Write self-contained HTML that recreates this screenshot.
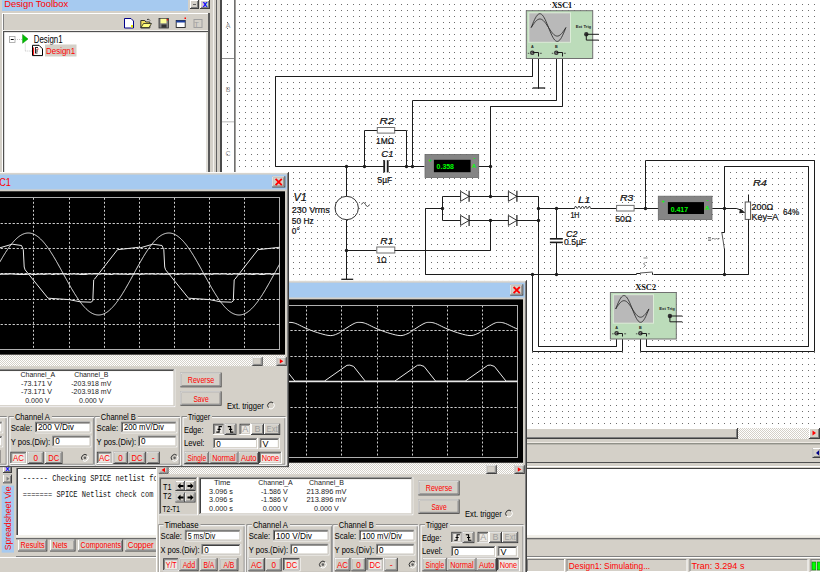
<!DOCTYPE html><html><head><meta charset="utf-8"><style>html,body{margin:0;padding:0;overflow:hidden;background:#d4d0c8}svg{display:block}</style></head><body><svg width="820" height="572" viewBox="0 0 820 572"><rect x="0" y="0" width="820" height="572" fill="#d4d0c8"/>
<rect x="236" y="0" width="584" height="428" fill="#ffffff" />
<defs><pattern id="dots" x="239" y="4" width="5.986" height="5.986" patternUnits="userSpaceOnUse"><rect x="0" y="0" width="1.2" height="1.2" fill="#7c7c7c"/></pattern></defs>
<defs><pattern id="dA" x="239" y="4" width="6" height="6" patternUnits="userSpaceOnUse"><rect x="0" y="0" width="1" height="1" fill="#6e6e6e"/></pattern><pattern id="dB" x="238" y="4" width="6" height="6" patternUnits="userSpaceOnUse"><rect x="0" y="0" width="1" height="1" fill="#6e6e6e"/></pattern><pattern id="dC" x="239" y="3" width="6" height="6" patternUnits="userSpaceOnUse"><rect x="0" y="0" width="1" height="1" fill="#6e6e6e"/></pattern><pattern id="dD" x="238" y="3" width="6" height="6" patternUnits="userSpaceOnUse"><rect x="0" y="0" width="1" height="1" fill="#6e6e6e"/></pattern></defs>
<rect x="236" y="0" width="216" height="390" fill="url(#dA)" />
<rect x="452" y="0" width="368" height="390" fill="url(#dB)" />
<rect x="236" y="390" width="216" height="38" fill="url(#dC)" />
<rect x="452" y="390" width="368" height="38" fill="url(#dD)" />
<rect x="209" y="0" width="7" height="175" fill="#d4d0c8" />
<rect x="213" y="0" width="1" height="175" fill="#f4f2ee" />
<rect x="216" y="0" width="1" height="175" fill="#606060" />
<rect x="217" y="0" width="3" height="175" fill="#d4d0c8" />
<rect x="220" y="0" width="2" height="175" fill="#4a4a4a" />
<rect x="222" y="0" width="12" height="175" fill="#ffffff" />
<defs><pattern id="rdots" x="227" y="4" width="7" height="6" patternUnits="userSpaceOnUse"><rect x="0" y="0" width="1" height="1" fill="#6e6e6e"/><rect x="7" y="0" width="1" height="1" fill="#4a4a4a"/></pattern></defs>
<rect x="227" y="0" width="8" height="172" fill="url(#rdots)" />
<rect x="234" y="0" width="1.5" height="175" fill="#707070" />
<rect x="222" y="58" width="12" height="1" fill="#8c8c8c" />
<rect x="222" y="121" width="12" height="1.5" fill="#d0d0d0" />
<text x="228" y="28" font-family="Liberation Sans" font-size="7" fill="#909090" font-weight="normal" font-style="normal" text-anchor="middle"  >A</text>
<text x="228" y="91.5" font-family="Liberation Sans" font-size="7" fill="#909090" font-weight="normal" font-style="normal" text-anchor="middle"  >B</text>
<text x="228" y="156" font-family="Liberation Sans" font-size="7" fill="#909090" font-weight="normal" font-style="normal" text-anchor="middle"  >C</text>
<polyline points="275.50,166.50 275.50,76.50 532.50,76.50 532.50,52.50" fill="none" stroke="#1c1c1c" stroke-width="1" />
<polyline points="275.50,166.50 384.50,166.50" fill="none" stroke="#1c1c1c" stroke-width="1" />
<polyline points="388.50,166.50 424.50,166.50" fill="none" stroke="#1c1c1c" stroke-width="1" />
<rect x="383.3" y="160.2" width="1.8" height="12.2" fill="#1c1c1c" />
<rect x="386.8" y="160.2" width="1.8" height="12.2" fill="#1c1c1c" />
<polyline points="364.50,166.50 364.50,130.50 377.50,130.50" fill="none" stroke="#1c1c1c" stroke-width="1" />
<rect x="377.3" y="127.50000000000001" width="17.399999999999977" height="5.6" fill="#ffffff" stroke="#707070" stroke-width="1"/>
<polyline points="394.50,130.50 406.50,130.50 406.50,166.50" fill="none" stroke="#1c1c1c" stroke-width="1" />
<circle cx="346.5" cy="166.5" r="1.7" fill="#1c1c1c"/>
<circle cx="364.5" cy="166.5" r="1.7" fill="#1c1c1c"/>
<circle cx="406.5" cy="166.5" r="1.7" fill="#1c1c1c"/>
<circle cx="412.5" cy="166.5" r="1.7" fill="#1c1c1c"/>
<polyline points="412.50,166.50 412.50,100.50 556.50,100.50 556.50,52.50" fill="none" stroke="#1c1c1c" stroke-width="1" />
<polyline points="478.50,166.50 490.50,166.50" fill="none" stroke="#1c1c1c" stroke-width="1" />
<circle cx="490.5" cy="166.5" r="1.7" fill="#1c1c1c"/>
<polyline points="490.50,196.50 490.50,106.50 562.50,106.50 562.50,52.50" fill="none" stroke="#1c1c1c" stroke-width="1" />
<polyline points="538.50,52.50 538.50,88.50" fill="none" stroke="#1c1c1c" stroke-width="1" />
<line x1="532.7" y1="88" x2="545.2" y2="88" stroke="#1c1c1c" stroke-width="1.3" />
<polyline points="346.50,166.50 346.50,196.50" fill="none" stroke="#1c1c1c" stroke-width="1" />
<polyline points="346.50,219.50 346.50,279.50" fill="none" stroke="#1c1c1c" stroke-width="1" />
<line x1="341.3" y1="279.3" x2="353.2" y2="279.3" stroke="#1c1c1c" stroke-width="1.3" />
<circle cx="346.7" cy="208" r="11.7" fill="none" stroke="#333" stroke-width="1"/>
<path d="M361.5,204.5 q2,-4 4,0 t4,0" fill="none" stroke="#333" stroke-width="0.9"/>
<polyline points="346.50,250.50 376.50,250.50" fill="none" stroke="#1c1c1c" stroke-width="1" />
<circle cx="346.5" cy="250.5" r="1.7" fill="#1c1c1c"/>
<rect x="376.8" y="247.0" width="18.0" height="6" fill="#ffffff" stroke="#707070" stroke-width="1"/>
<polyline points="394.50,250.50 490.50,250.50 490.50,220.50" fill="none" stroke="#1c1c1c" stroke-width="1" />
<polyline points="442.50,196.50 538.50,196.50" fill="none" stroke="#1c1c1c" stroke-width="1" />
<polyline points="442.50,220.50 538.50,220.50" fill="none" stroke="#1c1c1c" stroke-width="1" />
<polyline points="442.50,196.50 442.50,220.50" fill="none" stroke="#1c1c1c" stroke-width="1" />
<polyline points="538.50,196.50 538.50,346.50 616.50,346.50 616.50,334.50" fill="none" stroke="#1c1c1c" stroke-width="1" />
<polygon points="460.6,191.3 460.6,201.3 469.1,196.3" fill="#fff" stroke="#333" stroke-width="1"/>
<line x1="469.1" y1="190.8" x2="469.1" y2="201.8" stroke="#1c1c1c" stroke-width="1.2" />
<polygon points="508.4,191.3 508.4,201.3 516.9,196.3" fill="#fff" stroke="#333" stroke-width="1"/>
<line x1="516.9" y1="190.8" x2="516.9" y2="201.8" stroke="#1c1c1c" stroke-width="1.2" />
<polygon points="460.6,215.4 460.6,225.4 469.1,220.4" fill="#fff" stroke="#333" stroke-width="1"/>
<line x1="469.1" y1="214.9" x2="469.1" y2="225.9" stroke="#1c1c1c" stroke-width="1.2" />
<polygon points="508.4,215.4 508.4,225.4 516.9,220.4" fill="#fff" stroke="#333" stroke-width="1"/>
<line x1="516.9" y1="214.9" x2="516.9" y2="225.9" stroke="#1c1c1c" stroke-width="1.2" />
<circle cx="490.5" cy="196.5" r="1.7" fill="#1c1c1c"/>
<circle cx="490.5" cy="220.5" r="1.7" fill="#1c1c1c"/>
<circle cx="442.5" cy="208.5" r="1.7" fill="#1c1c1c"/>
<circle cx="538.5" cy="208.5" r="1.7" fill="#1c1c1c"/>
<circle cx="538.5" cy="220.5" r="1.7" fill="#1c1c1c"/>
<polyline points="442.50,208.50 425.50,208.50 425.50,274.50 636.50,274.50" fill="none" stroke="#1c1c1c" stroke-width="1" />
<polyline points="653.50,274.50 748.50,274.50" fill="none" stroke="#1c1c1c" stroke-width="1" />
<circle cx="532.5" cy="274.5" r="1.7" fill="#1c1c1c"/>
<circle cx="556.5" cy="274.5" r="1.7" fill="#1c1c1c"/>
<circle cx="724.5" cy="274.5" r="1.7" fill="#1c1c1c"/>
<polyline points="532.50,274.50 532.50,351.50 622.50,351.50 622.50,334.50" fill="none" stroke="#1c1c1c" stroke-width="1" />
<polyline points="538.50,208.50 574.50,208.50" fill="none" stroke="#1c1c1c" stroke-width="1" />
<circle cx="556.5" cy="208.5" r="1.7" fill="#1c1c1c"/>
<polyline points="556.50,208.50 556.50,238.50" fill="none" stroke="#1c1c1c" stroke-width="1" />
<polyline points="556.50,242.50 556.50,274.50" fill="none" stroke="#1c1c1c" stroke-width="1" />
<rect x="549.9" y="238" width="12.9" height="1.6" fill="#1c1c1c" />
<rect x="549.9" y="241.6" width="12.9" height="1.6" fill="#1c1c1c" />
<polyline points="574.40,208.20 575.50,206.00 577.25,208.50 579.00,206.00 580.75,208.50 582.50,206.00 584.25,208.50 586.00,206.00 587.75,208.50 589.50,206.00 590.50,208.20" fill="none" stroke="#333" stroke-width="0.9" />
<polyline points="590.50,208.50 616.50,208.50" fill="none" stroke="#1c1c1c" stroke-width="1" />
<rect x="616.6" y="205.39999999999998" width="17.5" height="5.6" fill="#ffffff" stroke="#707070" stroke-width="1"/>
<polyline points="634.50,208.50 658.50,208.50" fill="none" stroke="#1c1c1c" stroke-width="1" />
<circle cx="645.5" cy="208.5" r="1.7" fill="#1c1c1c"/>
<polyline points="645.50,208.50 645.50,160.50 814.50,160.50 814.50,351.50 640.50,351.50 640.50,334.50" fill="none" stroke="#1c1c1c" stroke-width="1" />
<polyline points="712.50,208.50 724.50,208.50" fill="none" stroke="#1c1c1c" stroke-width="1" />
<circle cx="724.5" cy="208.5" r="1.7" fill="#1c1c1c"/>
<polyline points="724.50,208.50 724.50,166.50 808.50,166.50 808.50,346.50 646.50,346.50 646.50,334.50" fill="none" stroke="#1c1c1c" stroke-width="1" />
<polyline points="724.50,208.50 736.50,208.50 742.50,210.50" fill="none" stroke="#1c1c1c" stroke-width="1" />
<polygon points="740,208.8 745.6,212.7 739.2,213.2" fill="#222"/>
<polyline points="748.50,194.50 748.50,202.50" fill="none" stroke="#1c1c1c" stroke-width="1" />
<rect x="745.2" y="202" width="5.4" height="17.4" fill="#ffffff" stroke="#555" stroke-width="1"/>
<polyline points="748.50,219.50 748.50,274.50" fill="none" stroke="#1c1c1c" stroke-width="1" />
<polyline points="724.50,208.50 724.50,232.50 721.50,232.50" fill="none" stroke="#1c1c1c" stroke-width="1" />
<line x1="721.8" y1="232.4" x2="724.4" y2="249" stroke="#555" stroke-width="1" />
<polyline points="724.50,248.50 724.50,274.50" fill="none" stroke="#1c1c1c" stroke-width="1" />
<path d="M708,239 h3 M708,237.5 h3 M708,240.5 h3 M712,239.5 l1.5,-1.5 l1.5,1.5 l1.5,-1.5 l1.5,1.5 l1.5,-1.5" fill="none" stroke="#555" stroke-width="0.7"/>
<polyline points="636.50,274.50 636.50,273.50 640.50,273.50" fill="none" stroke="#1c1c1c" stroke-width="1" />
<line x1="640" y1="273" x2="652.5" y2="272" stroke="#555" stroke-width="1" />
<polyline points="652.50,272.50 652.50,274.50" fill="none" stroke="#1c1c1c" stroke-width="1" />
<path d="M645.5,262 l-2,2 l2,1.5 l-2,2 M643.5,258 h4" fill="none" stroke="#555" stroke-width="0.7"/>
<rect x="425" y="154.4" width="53.69999999999999" height="23.099999999999994" fill="#858585" stroke="#6a6a6a" stroke-width="0.8"/>
<rect x="433.9" y="159.8" width="36.700000000000045" height="12.399999999999977" fill="#000000" />
<text x="436.6" y="169" font-family="Liberation Sans" font-size="7.6" fill="#00ff00" font-weight="bold" font-style="normal" text-anchor="start" textLength="17.4" lengthAdjust="spacingAndGlyphs" >0.358</text>
<text x="430" y="161.6" font-family="Liberation Sans" font-size="6" fill="#00ff00" font-weight="bold" font-style="normal" text-anchor="middle"  >+</text>
<text x="474.2" y="160.4" font-family="Liberation Sans" font-size="6" fill="#00ff00" font-weight="bold" font-style="normal" text-anchor="middle"  >-</text>
<text x="473.9" y="168.45" font-family="Liberation Sans" font-size="6" fill="#00ff00" font-weight="bold" font-style="normal" text-anchor="middle"  >A</text>
<rect x="658.3" y="196.2" width="53.700000000000045" height="23.400000000000006" fill="#858585" stroke="#6a6a6a" stroke-width="0.8"/>
<rect x="667.9" y="202.1" width="36.10000000000002" height="11.900000000000006" fill="#000000" />
<text x="670.7" y="211.5" font-family="Liberation Sans" font-size="7.6" fill="#00ff00" font-weight="bold" font-style="normal" text-anchor="start" textLength="17.4" lengthAdjust="spacingAndGlyphs" >0.417</text>
<text x="663.3" y="203.39999999999998" font-family="Liberation Sans" font-size="6" fill="#00ff00" font-weight="bold" font-style="normal" text-anchor="middle"  >+</text>
<text x="707.5" y="202.2" font-family="Liberation Sans" font-size="6" fill="#00ff00" font-weight="bold" font-style="normal" text-anchor="middle"  >-</text>
<text x="707.2" y="210.39999999999998" font-family="Liberation Sans" font-size="6" fill="#00ff00" font-weight="bold" font-style="normal" text-anchor="middle"  >A</text>
<rect x="526.3" y="10.7" width="66.40000000000009" height="47.8" fill="#bcdcba" stroke="#707070" stroke-width="1"/>
<rect x="528.8" y="12.8" width="41.700000000000045" height="29.499999999999996" fill="#b9b9b9" stroke="#dcecd8" stroke-width="1"/>
<polyline points="531.20,27.55 532.07,25.38 532.93,23.27 533.80,21.26 534.67,19.40 535.54,17.75 536.40,16.33 537.27,15.20 538.14,14.36 539.01,13.86 539.88,13.69 540.74,13.86 541.61,14.36 542.48,15.20 543.34,16.33 544.21,17.75 545.08,19.40 545.95,21.26 546.81,23.27 547.68,25.38 548.55,27.55 549.42,29.72 550.28,31.83 551.15,33.84 552.02,35.70 552.89,37.35 553.75,38.77 554.62,39.90 555.49,40.74 556.36,41.24 557.22,41.41 558.09,41.24 558.96,40.74 559.83,39.90 560.69,38.77 561.56,37.35 562.43,35.70 563.30,33.84 564.16,31.83 565.03,29.72 565.90,27.55" fill="none" stroke="#222" stroke-width="0.8" />
<polyline points="531.20,27.55 532.07,26.21 532.93,24.91 533.80,23.67 534.67,22.52 535.54,21.50 536.40,20.63 537.27,19.93 538.14,19.41 539.01,19.10 539.88,18.99 540.74,19.10 541.61,19.41 542.48,19.93 543.34,20.63 544.21,21.50 545.08,22.52 545.95,23.67 546.81,24.91 547.68,26.21 548.55,27.55 549.42,28.89 550.28,30.19 551.15,31.43 552.02,32.58 552.89,33.60 553.75,34.47 554.62,35.17 555.49,35.69 556.36,36.00 557.22,36.10 558.09,36.00 558.96,35.69 559.83,35.17 560.69,34.47 561.56,33.60 562.43,32.58 563.30,31.43 564.16,30.19 565.03,28.89 565.90,27.55" fill="none" stroke="#222" stroke-width="0.8" />
<text x="551.7" y="7.7" font-family="Liberation Serif" font-size="7.7" fill="#111" font-weight="bold" font-style="normal" text-anchor="start" textLength="20.5" lengthAdjust="spacingAndGlyphs" >XSC1</text>
<text x="575.7" y="28.299999999999997" font-family="Liberation Sans" font-size="4.2" fill="#222" font-weight="bold" font-style="normal" text-anchor="start" textLength="15.5" lengthAdjust="spacingAndGlyphs" >Ext Trig</text>
<circle cx="586.3000000000001" cy="34.3" r="2.2" fill="#333"/>
<line x1="586.3000000000001" y1="34.3" x2="598.7" y2="34.3" stroke="#1c1c1c" stroke-width="1" />
<polyline points="586.30,34.30 586.30,40.10 598.70,40.10" fill="none" stroke="#1c1c1c" stroke-width="1" />
<circle cx="532.3" cy="52.8" r="2.3" fill="#333"/>
<line x1="531.0" y1="52.8" x2="533.5999999999999" y2="52.8" stroke="#bbb" stroke-width="0.5" />
<line x1="532.3" y1="51.5" x2="532.3" y2="54.099999999999994" stroke="#bbb" stroke-width="0.5" />
<text x="532.3" y="48.3" font-family="Liberation Sans" font-size="3.8" fill="#222" font-weight="bold" font-style="normal" text-anchor="middle"  >A</text>
<line x1="527.8" y1="53.3" x2="529.3" y2="53.3" stroke="#333" stroke-width="0.8" />
<line x1="539.8" y1="53.3" x2="541.8" y2="53.3" stroke="#333" stroke-width="0.8" />
<circle cx="556.3" cy="52.8" r="2.3" fill="#333"/>
<line x1="555.0" y1="52.8" x2="557.5999999999999" y2="52.8" stroke="#bbb" stroke-width="0.5" />
<line x1="556.3" y1="51.5" x2="556.3" y2="54.099999999999994" stroke="#bbb" stroke-width="0.5" />
<text x="556.3" y="48.3" font-family="Liberation Sans" font-size="3.8" fill="#222" font-weight="bold" font-style="normal" text-anchor="middle"  >B</text>
<line x1="551.8" y1="53.3" x2="553.3" y2="53.3" stroke="#333" stroke-width="0.8" />
<line x1="563.8" y1="53.3" x2="565.8" y2="53.3" stroke="#333" stroke-width="0.8" />
<polyline points="532.50,52.50 538.50,52.50 538.50,56.50" fill="none" stroke="#1c1c1c" stroke-width="1" />
<polyline points="556.50,52.50 562.50,52.50 562.50,56.50" fill="none" stroke="#1c1c1c" stroke-width="1" />
<rect x="610.4" y="292.5" width="65.89999999999998" height="46.5" fill="#bcdcba" stroke="#707070" stroke-width="1"/>
<rect x="613.3" y="294.7" width="40.200000000000045" height="28.5" fill="#b9b9b9" stroke="#dcecd8" stroke-width="1"/>
<polyline points="615.70,308.95 616.53,306.85 617.36,304.81 618.19,302.87 619.02,301.08 619.85,299.48 620.68,298.11 621.51,297.01 622.34,296.21 623.17,295.72 624.00,295.56 624.83,295.72 625.66,296.21 626.49,297.01 627.32,298.11 628.15,299.48 628.98,301.08 629.81,302.87 630.64,304.81 631.47,306.85 632.30,308.95 633.13,311.05 633.96,313.09 634.79,315.03 635.62,316.82 636.45,318.42 637.28,319.79 638.11,320.89 638.94,321.69 639.77,322.18 640.60,322.34 641.43,322.18 642.26,321.69 643.09,320.89 643.92,319.79 644.75,318.42 645.58,316.82 646.41,315.03 647.24,313.09 648.07,311.05 648.90,308.95" fill="none" stroke="#222" stroke-width="0.8" />
<polyline points="615.70,308.95 616.53,307.66 617.36,306.40 618.19,305.20 619.02,304.09 619.85,303.11 620.68,302.26 621.51,301.59 622.34,301.09 623.17,300.79 624.00,300.69 624.83,300.79 625.66,301.09 626.49,301.59 627.32,302.26 628.15,303.11 628.98,304.09 629.81,305.20 630.64,306.40 631.47,307.66 632.30,308.95 633.13,310.24 633.96,311.50 634.79,312.70 635.62,313.81 636.45,314.79 637.28,315.64 638.11,316.31 638.94,316.81 639.77,317.11 640.60,317.21 641.43,317.11 642.26,316.81 643.09,316.31 643.92,315.64 644.75,314.79 645.58,313.81 646.41,312.70 647.24,311.50 648.07,310.24 648.90,308.95" fill="none" stroke="#222" stroke-width="0.8" />
<text x="635.2" y="290" font-family="Liberation Serif" font-size="7.7" fill="#111" font-weight="bold" font-style="normal" text-anchor="start" textLength="20.9" lengthAdjust="spacingAndGlyphs" >XSC2</text>
<text x="659.3" y="310" font-family="Liberation Sans" font-size="4.2" fill="#222" font-weight="bold" font-style="normal" text-anchor="start" textLength="15.5" lengthAdjust="spacingAndGlyphs" >Ext Trig</text>
<circle cx="669.9" cy="316" r="2.2" fill="#333"/>
<line x1="669.9" y1="316" x2="682.3" y2="316" stroke="#1c1c1c" stroke-width="1" />
<polyline points="669.90,316.00 669.90,321.80 682.30,321.80" fill="none" stroke="#1c1c1c" stroke-width="1" />
<circle cx="616.6" cy="333.3" r="2.3" fill="#333"/>
<line x1="615.3000000000001" y1="333.3" x2="617.9" y2="333.3" stroke="#bbb" stroke-width="0.5" />
<line x1="616.6" y1="332.0" x2="616.6" y2="334.6" stroke="#bbb" stroke-width="0.5" />
<text x="616.6" y="328.8" font-family="Liberation Sans" font-size="3.8" fill="#222" font-weight="bold" font-style="normal" text-anchor="middle"  >A</text>
<line x1="612.1" y1="333.8" x2="613.6" y2="333.8" stroke="#333" stroke-width="0.8" />
<line x1="624.1" y1="333.8" x2="626.1" y2="333.8" stroke="#333" stroke-width="0.8" />
<circle cx="640.4" cy="333.3" r="2.3" fill="#333"/>
<line x1="639.1" y1="333.3" x2="641.6999999999999" y2="333.3" stroke="#bbb" stroke-width="0.5" />
<line x1="640.4" y1="332.0" x2="640.4" y2="334.6" stroke="#bbb" stroke-width="0.5" />
<text x="640.4" y="328.8" font-family="Liberation Sans" font-size="3.8" fill="#222" font-weight="bold" font-style="normal" text-anchor="middle"  >B</text>
<line x1="635.9" y1="333.8" x2="637.4" y2="333.8" stroke="#333" stroke-width="0.8" />
<line x1="647.9" y1="333.8" x2="649.9" y2="333.8" stroke="#333" stroke-width="0.8" />
<polyline points="616.50,333.50 622.50,333.50 622.50,336.50" fill="none" stroke="#1c1c1c" stroke-width="1" />
<polyline points="640.50,333.50 646.50,333.50 646.50,336.50" fill="none" stroke="#1c1c1c" stroke-width="1" />
<text x="379.4" y="124" font-family="Liberation Sans" font-size="9.5" fill="#111" font-weight="normal" font-style="italic" text-anchor="start" textLength="14.8" lengthAdjust="spacingAndGlyphs" stroke="#111" stroke-width="0.22">R2</text>
<text x="376" y="144" font-family="Liberation Sans" font-size="9.5" fill="#111" font-weight="normal" font-style="normal" text-anchor="start" textLength="18" lengthAdjust="spacingAndGlyphs" stroke="#111" stroke-width="0.22">1MΩ</text>
<text x="381.3" y="157" font-family="Liberation Sans" font-size="9.5" fill="#111" font-weight="normal" font-style="italic" text-anchor="start" textLength="12.3" lengthAdjust="spacingAndGlyphs" stroke="#111" stroke-width="0.22">C1</text>
<text x="377.6" y="182.7" font-family="Liberation Sans" font-size="9.5" fill="#111" font-weight="normal" font-style="normal" text-anchor="start" textLength="14.6" lengthAdjust="spacingAndGlyphs" stroke="#111" stroke-width="0.22">5µF</text>
<text x="293.6" y="200.7" font-family="Liberation Sans" font-size="10.5" fill="#111" font-weight="normal" font-style="italic" text-anchor="start" textLength="13.2" lengthAdjust="spacingAndGlyphs" stroke="#111" stroke-width="0.22">V1</text>
<text x="291.8" y="213.4" font-family="Liberation Sans" font-size="9.5" fill="#111" font-weight="normal" font-style="normal" text-anchor="start" textLength="38" lengthAdjust="spacingAndGlyphs" stroke="#111" stroke-width="0.22">230 Vrms</text>
<text x="291.8" y="223.6" font-family="Liberation Sans" font-size="9.5" fill="#111" font-weight="normal" font-style="normal" text-anchor="start" textLength="22" lengthAdjust="spacingAndGlyphs" stroke="#111" stroke-width="0.22">50 Hz</text>
<text x="291.8" y="234.3" font-family="Liberation Sans" font-size="9.5" fill="#111" font-weight="normal" font-style="normal" text-anchor="start" textLength="8" lengthAdjust="spacingAndGlyphs" stroke="#111" stroke-width="0.22">0°</text>
<text x="380.3" y="243.5" font-family="Liberation Sans" font-size="9.5" fill="#111" font-weight="normal" font-style="italic" text-anchor="start" textLength="13.1" lengthAdjust="spacingAndGlyphs" stroke="#111" stroke-width="0.22">R1</text>
<text x="376.8" y="263.3" font-family="Liberation Sans" font-size="9.5" fill="#111" font-weight="normal" font-style="normal" text-anchor="start" textLength="9.9" lengthAdjust="spacingAndGlyphs" stroke="#111" stroke-width="0.22">1Ω</text>
<text x="578" y="203.1" font-family="Liberation Sans" font-size="9.5" fill="#111" font-weight="normal" font-style="italic" text-anchor="start" textLength="12.5" lengthAdjust="spacingAndGlyphs" stroke="#111" stroke-width="0.22">L1</text>
<text x="570.4" y="217.6" font-family="Liberation Sans" font-size="9.5" fill="#111" font-weight="normal" font-style="normal" text-anchor="start" textLength="9.1" lengthAdjust="spacingAndGlyphs" stroke="#111" stroke-width="0.22">1H</text>
<text x="566" y="236.9" font-family="Liberation Sans" font-size="9.5" fill="#111" font-weight="normal" font-style="italic" text-anchor="start" textLength="11.5" lengthAdjust="spacingAndGlyphs" stroke="#111" stroke-width="0.22">C2</text>
<text x="564" y="245.4" font-family="Liberation Sans" font-size="9.5" fill="#111" font-weight="normal" font-style="normal" text-anchor="start" textLength="22.1" lengthAdjust="spacingAndGlyphs" stroke="#111" stroke-width="0.22">0.5µF</text>
<text x="620" y="201.3" font-family="Liberation Sans" font-size="9.5" fill="#111" font-weight="normal" font-style="italic" text-anchor="start" textLength="13.4" lengthAdjust="spacingAndGlyphs" stroke="#111" stroke-width="0.22">R3</text>
<text x="615.2" y="222.3" font-family="Liberation Sans" font-size="9.5" fill="#111" font-weight="normal" font-style="normal" text-anchor="start" textLength="16.4" lengthAdjust="spacingAndGlyphs" stroke="#111" stroke-width="0.22">50Ω</text>
<text x="752.9" y="186.3" font-family="Liberation Sans" font-size="9.5" fill="#111" font-weight="normal" font-style="italic" text-anchor="start" textLength="13.9" lengthAdjust="spacingAndGlyphs" stroke="#111" stroke-width="0.22">R4</text>
<text x="751.5" y="209.6" font-family="Liberation Sans" font-size="9.5" fill="#111" font-weight="normal" font-style="normal" text-anchor="start" textLength="21.6" lengthAdjust="spacingAndGlyphs" stroke="#111" stroke-width="0.22">200Ω</text>
<text x="751.5" y="220.2" font-family="Liberation Sans" font-size="9.5" fill="#111" font-weight="normal" font-style="normal" text-anchor="start" textLength="26.9" lengthAdjust="spacingAndGlyphs" stroke="#111" stroke-width="0.22">Key=A</text>
<text x="783" y="214.5" font-family="Liberation Sans" font-size="9.5" fill="#111" font-weight="normal" font-style="normal" text-anchor="start" textLength="16.3" lengthAdjust="spacingAndGlyphs" stroke="#111" stroke-width="0.22">64%</text>
<rect x="0" y="0" width="209" height="175" fill="#d4d0c8" />
<rect x="2" y="0" width="186" height="11" fill="#a6caf0" />
<text x="4.2" y="7.4" font-family="Liberation Sans" font-size="9.6" fill="#ff0000" font-weight="normal" font-style="normal" text-anchor="start" textLength="64" lengthAdjust="spacingAndGlyphs" >Design Toolbox</text>
<rect x="190" y="0" width="9" height="9" fill="#404040" />
<rect x="190" y="0" width="8" height="8" fill="#ffffff" />
<rect x="191" y="1" width="7" height="7" fill="#808080" />
<rect x="191" y="1" width="6" height="6" fill="#d4d0c8" />
<line x1="193" y1="4.5" x2="196" y2="4.5" stroke="#606060" stroke-width="1" />
<rect x="200" y="0" width="10" height="9" fill="#404040" />
<rect x="200" y="0" width="9" height="8" fill="#ffffff" />
<rect x="201" y="1" width="8" height="7" fill="#808080" />
<rect x="201" y="1" width="7" height="6" fill="#d4d0c8" />
<text x="205" y="7.3" font-family="Liberation Sans" font-size="9" fill="#0000ff" font-weight="bold" font-style="normal" text-anchor="middle"  >x</text>
<rect x="2" y="13" width="207" height="1" fill="#ffffff" />
<rect x="2" y="13" width="1" height="19" fill="#ffffff" />
<rect x="3" y="14" width="1" height="16" fill="#808080" />
<rect x="208" y="13" width="1" height="19" fill="#404040" />
<rect x="2" y="30" width="207" height="1" fill="#f4f2ee" />
<rect x="3" y="31" width="206" height="1.3" fill="#505050" />
<path d="M124.5,18.5 h6.5 l2.5,2.5 v7 h-9 z" fill="#fff" stroke="#00008b" stroke-width="1"/>
<rect x="131" y="25" width="2" height="2.5" fill="#e8e800" />
<path d="M140.8,20.5 h4 l1,1.5 h4 v6 h-9 z" fill="#f0e060" stroke="#222" stroke-width="0.9"/>
<path d="M141,27.5 l2.5,-4 h8 l-2.5,4 z" fill="#ffff80" stroke="#222" stroke-width="0.8"/>
<path d="M147,19.5 q2,-1 3,1" fill="none" stroke="#222" stroke-width="0.9"/>
<rect x="159" y="18.5" width="9.5" height="9.5" fill="#808080" stroke="#333" stroke-width="0.8"/>
<rect x="160.5" y="18.8" width="6" height="4.5" fill="#ffff99" />
<rect x="161.5" y="24.5" width="5" height="3.2" fill="#333" />
<rect x="166.8" y="19" width="1.2" height="1.5" fill="#ff0000" />
<rect x="176.2" y="20.5" width="9" height="7" fill="#ffffff" stroke="#222" stroke-width="0.9"/>
<rect x="176.2" y="20.5" width="9" height="2" fill="#1a3ea0" />
<rect x="184.5" y="17.5" width="1.5" height="1.5" fill="#ff0000" />
<rect x="194" y="19.5" width="8" height="8" fill="none" stroke="#a0a0a0" stroke-width="1"/>
<text x="196.5" y="27" font-family="Liberation Sans" font-size="8" fill="#a0a0a0" font-weight="normal" font-style="normal" text-anchor="middle"  >T</text>
<rect x="3" y="32.3" width="203" height="141" fill="#ffffff" />
<rect x="2" y="32" width="1" height="141" fill="#ffffff" />
<rect x="3" y="32" width="1.2" height="141" fill="#505050" />
<rect x="206" y="32" width="2" height="141" fill="#e2e0da" />
<rect x="208" y="13" width="2" height="160" fill="#5a5a5a" />
<rect x="3" y="172" width="206" height="1.5" fill="#ffffff" />
<rect x="9.5" y="36.5" width="5.5" height="6" fill="#ffffff" stroke="#a0a0a0" stroke-width="0.8"/>
<line x1="10.8" y1="39.5" x2="13.7" y2="39.5" stroke="#000" stroke-width="1" />
<line x1="15" y1="39.5" x2="22" y2="39.5" stroke="#a0a0a0" stroke-width="0.6" stroke-dasharray="1,1"/>
<polygon points="22.6,34.5 22.6,43.3 28,39" fill="#00c000" stroke="#008000" stroke-width="0.5"/>
<text x="33.7" y="43" font-family="Liberation Sans" font-size="10.2" fill="#000" font-weight="normal" font-style="normal" text-anchor="start" textLength="28.9" lengthAdjust="spacingAndGlyphs" >Design1</text>
<line x1="25.3" y1="43.5" x2="25.3" y2="51" stroke="#a0a0a0" stroke-width="0.6" stroke-dasharray="1,1"/>
<line x1="25.3" y1="51" x2="32" y2="51" stroke="#a0a0a0" stroke-width="0.6" stroke-dasharray="1,1"/>
<path d="M32.5,45.3 h6.5 l3.5,3.5 v6.8 h-10 z" fill="#fff" stroke="#000" stroke-width="1"/>
<line x1="33.6" y1="47.5" x2="33.6" y2="55" stroke="#ff0000" stroke-width="1" />
<path d="M35,47.5 h3 M35.5,48 v5 M35,53 h2.5 M37,49 v3" fill="none" stroke="#111" stroke-width="0.9"/>
<rect x="37.5" y="48.5" width="1" height="1" fill="#ff0000" />
<rect x="45" y="44.5" width="31.5" height="12" fill="#d4d0c8" />
<text x="46.1" y="54.3" font-family="Liberation Sans" font-size="9" fill="#ff0000" font-weight="normal" font-style="normal" text-anchor="start" textLength="29.1" lengthAdjust="spacingAndGlyphs" >Design1</text>
<defs><pattern id="chk" x="0" y="0" width="2" height="2" patternUnits="userSpaceOnUse"><rect width="2" height="2" fill="#ffffff"/><rect width="1" height="1" fill="#d4d0c8"/><rect x="1" y="1" width="1" height="1" fill="#d4d0c8"/></pattern></defs>
<rect x="236" y="428" width="584" height="11" fill="url(#chk)" />
<rect x="236" y="428" width="502" height="11" fill="#404040" />
<rect x="236" y="428" width="501" height="10" fill="#ffffff" />
<rect x="237" y="429" width="500" height="9" fill="#808080" />
<rect x="237" y="429" width="499" height="8" fill="#d4d0c8" />
<rect x="809" y="428" width="11" height="11" fill="#404040" />
<rect x="809" y="428" width="10" height="10" fill="#ffffff" />
<rect x="810" y="429" width="9" height="9" fill="#808080" />
<rect x="810" y="429" width="8" height="8" fill="#d4d0c8" />
<polygon points="812.5,430.5 812.5,435.5 816,433" fill="#ff0000"/>
<rect x="0" y="439" width="820" height="3" fill="#d4d0c8" />
<rect x="0" y="443" width="820" height="1.4" fill="#909088" />
<rect x="812.5" y="448" width="9" height="10" fill="#404040" />
<rect x="812.5" y="448" width="8" height="9" fill="#ffffff" />
<rect x="813.5" y="449" width="7" height="8" fill="#808080" />
<rect x="813.5" y="449" width="6" height="7" fill="#d4d0c8" />
<polygon points="819,450.3 819,455.5 816,452.9" fill="#00008b"/>
<rect x="0" y="442" width="820" height="1" fill="#eeeae4" />
<rect x="0" y="462" width="820" height="1" fill="#505050" />
<rect x="0" y="466" width="820" height="1" fill="#ffffff" />
<rect x="16" y="468" width="804" height="69" fill="#ffffff" />
<rect x="16" y="468" width="804" height="1" fill="#404040" />
<rect x="16" y="468" width="1" height="69" fill="#808080" />
<rect x="17" y="469" width="1" height="68" fill="#404040" />
<rect x="16" y="535" width="804" height="2.5" fill="#f2f0ea" />
<rect x="16" y="538" width="804" height="1.3" fill="#6a6a6a" />
<text x="22.7" y="480.8" font-family="Liberation Mono" font-size="9.4" fill="#111" font-weight="normal" font-style="normal" text-anchor="start" textLength="135" lengthAdjust="spacingAndGlyphs" >------ Checking SPICE netlist fo</text>
<text x="22.7" y="497.4" font-family="Liberation Mono" font-size="9.4" fill="#111" font-weight="normal" font-style="normal" text-anchor="start" textLength="130.8" lengthAdjust="spacingAndGlyphs" >======= SPICE Netlist check com</text>
<rect x="18" y="539.5" width="29.299999999999997" height="12" fill="#404040" />
<rect x="18" y="539.5" width="28.299999999999997" height="11" fill="#ffffff" />
<rect x="19" y="540.5" width="27.299999999999997" height="10" fill="#808080" />
<rect x="19" y="540.5" width="26.299999999999997" height="9" fill="#d4d0c8" />
<text x="20.5" y="548.2" font-family="Liberation Sans" font-size="8.4" fill="#ff0000" font-weight="normal" font-style="normal" text-anchor="start" textLength="24" lengthAdjust="spacingAndGlyphs" >Results</text>
<rect x="50" y="539.5" width="25.5" height="12" fill="#404040" />
<rect x="50" y="539.5" width="24.5" height="11" fill="#ffffff" />
<rect x="51" y="540.5" width="23.5" height="10" fill="#808080" />
<rect x="51" y="540.5" width="22.5" height="9" fill="#d4d0c8" />
<text x="52.5" y="548.2" font-family="Liberation Sans" font-size="8.4" fill="#ff0000" font-weight="normal" font-style="normal" text-anchor="start" textLength="15" lengthAdjust="spacingAndGlyphs" >Nets</text>
<rect x="78" y="539.5" width="45.099999999999994" height="12" fill="#404040" />
<rect x="78" y="539.5" width="44.099999999999994" height="11" fill="#ffffff" />
<rect x="79" y="540.5" width="43.099999999999994" height="10" fill="#808080" />
<rect x="79" y="540.5" width="42.099999999999994" height="9" fill="#d4d0c8" />
<text x="80.5" y="548.2" font-family="Liberation Sans" font-size="8.4" fill="#ff0000" font-weight="normal" font-style="normal" text-anchor="start" textLength="40.5" lengthAdjust="spacingAndGlyphs" >Components</text>
<rect x="125.2" y="539.5" width="34.8" height="12" fill="#404040" />
<rect x="125.2" y="539.5" width="33.8" height="11" fill="#ffffff" />
<rect x="126.2" y="540.5" width="32.8" height="10" fill="#808080" />
<rect x="126.2" y="540.5" width="31.799999999999997" height="9" fill="#d4d0c8" />
<text x="127.7" y="548.2" font-family="Liberation Sans" font-size="8.4" fill="#ff0000" font-weight="normal" font-style="normal" text-anchor="start" textLength="30" lengthAdjust="spacingAndGlyphs" >Copper l</text>
<rect x="0" y="556" width="820" height="1" fill="#808080" />
<rect x="0" y="557" width="820" height="1" fill="#ffffff" />
<rect x="527" y="559" width="38" height="1" fill="#808080" />
<rect x="527" y="559" width="1" height="13" fill="#808080" />
<rect x="527" y="571" width="38" height="1" fill="#ffffff" />
<rect x="564" y="559" width="1" height="13" fill="#ffffff" />
<rect x="566.5" y="559" width="121.0" height="1" fill="#808080" />
<rect x="566.5" y="559" width="1" height="13" fill="#808080" />
<rect x="566.5" y="571" width="121.0" height="1" fill="#ffffff" />
<rect x="686.5" y="559" width="1" height="13" fill="#ffffff" />
<rect x="689.5" y="559" width="119.0" height="1" fill="#808080" />
<rect x="689.5" y="559" width="1" height="13" fill="#808080" />
<rect x="689.5" y="571" width="119.0" height="1" fill="#ffffff" />
<rect x="807.5" y="559" width="1" height="13" fill="#ffffff" />
<rect x="810.5" y="559" width="10.5" height="1" fill="#808080" />
<rect x="810.5" y="559" width="1" height="13" fill="#808080" />
<rect x="810.5" y="571" width="10.5" height="1" fill="#ffffff" />
<rect x="820" y="559" width="1" height="13" fill="#ffffff" />
<text x="568.8" y="568.6" font-family="Liberation Sans" font-size="8.2" fill="#ff0000" font-weight="normal" font-style="normal" text-anchor="start" textLength="81.3" lengthAdjust="spacingAndGlyphs" >Design1: Simulating...</text>
<text x="691.5" y="568.6" font-family="Liberation Sans" font-size="8.2" fill="#ff0000" font-weight="normal" font-style="normal" text-anchor="start" textLength="52.9" lengthAdjust="spacingAndGlyphs" >Tran: 3.294 s</text>
<rect x="812" y="562" width="3.8" height="8" fill="#00ff00" stroke="#008000" stroke-width="0.6"/>
<rect x="817.3" y="562" width="3.8" height="8" fill="#00ff00" stroke="#008000" stroke-width="0.6"/>
<rect x="0" y="462" width="16" height="95" fill="#d4d0c8" />
<rect x="3" y="462" width="9" height="11" fill="#404040" />
<rect x="3" y="462" width="8" height="10" fill="#ffffff" />
<rect x="4" y="463" width="7" height="9" fill="#808080" />
<rect x="4" y="463" width="6" height="8" fill="#d4d0c8" />
<text x="7.5" y="470.5" font-family="Liberation Sans" font-size="8" fill="#0000ff" font-weight="bold" font-style="normal" text-anchor="middle"  >x</text>
<rect x="3" y="474.6" width="9" height="8.7" fill="#404040" />
<rect x="3" y="474.6" width="8" height="7.699999999999999" fill="#ffffff" />
<rect x="4" y="475.6" width="7" height="6.699999999999999" fill="#808080" />
<rect x="4" y="475.6" width="6" height="5.699999999999999" fill="#d4d0c8" />
<polygon points="6.5,476.5 6.5,481 9.5,478.7" fill="#808080"/>
<rect x="1.7" y="485.6" width="12.3" height="67" fill="#a6caf0" />
<text x="0" y="0" transform="translate(10.6,550.2) rotate(-90)" font-family="Liberation Sans" font-size="8.8" fill="#ff0000" textLength="63.7" lengthAdjust="spacingAndGlyphs">Spreadsheet Vie</text>
<rect x="158" y="280.2" width="369" height="294" fill="#d4d0c8" />
<rect x="158" y="280.2" width="369" height="1" fill="#ffffff" />
<rect x="526" y="280.2" width="1" height="294" fill="#404040" />
<rect x="525" y="281.2" width="1" height="293" fill="#808080" />
<rect x="158" y="280.2" width="1" height="294" fill="#ffffff" />
<rect x="158" y="573.2" width="369" height="1" fill="#404040" />
<rect x="159" y="572.2" width="367" height="1" fill="#808080" />
<rect x="160.5" y="282.7" width="364.2" height="15" fill="#a6caf0" />
<text x="169.5" y="294.0" font-family="Liberation Sans" font-size="10.3" fill="#ff0000" font-weight="normal" font-style="normal" text-anchor="start" textLength="79.5" lengthAdjust="spacingAndGlyphs" >Oscilloscope-XSC2</text>
<rect x="510.2" y="284.4" width="13.1" height="11.2" fill="#404040" />
<rect x="510.2" y="284.4" width="12.1" height="10.2" fill="#ffffff" />
<rect x="511.2" y="285.4" width="11.1" height="9.2" fill="#808080" />
<rect x="511.2" y="285.4" width="10.1" height="8.2" fill="#d4d0c8" />
<path d="M513.6,287.0 L519.8,293.2 M519.8,287.0 L513.6,293.2" stroke="#ff0000" stroke-width="1.8"/>
<rect x="160.5" y="297.7" width="364.5" height="1.7" fill="#d4d0c8" />
<rect x="162" y="299.4" width="361" height="163.3" fill="#000000" />
<line x1="201.5" y1="305.5" x2="201.5" y2="457.9" stroke="#cccccc" stroke-width="1" stroke-dasharray="2,2"/>
<line x1="236.5" y1="305.5" x2="236.5" y2="457.9" stroke="#cccccc" stroke-width="1" stroke-dasharray="2,2"/>
<line x1="271.5" y1="305.5" x2="271.5" y2="457.9" stroke="#cccccc" stroke-width="1" stroke-dasharray="2,2"/>
<line x1="306.5" y1="305.5" x2="306.5" y2="457.9" stroke="#cccccc" stroke-width="1" stroke-dasharray="2,2"/>
<line x1="341.5" y1="305.5" x2="341.5" y2="457.9" stroke="#cccccc" stroke-width="1" stroke-dasharray="2,2"/>
<line x1="377.5" y1="305.5" x2="377.5" y2="457.9" stroke="#cccccc" stroke-width="1" stroke-dasharray="2,2"/>
<line x1="412.5" y1="305.5" x2="412.5" y2="457.9" stroke="#cccccc" stroke-width="1" stroke-dasharray="2,2"/>
<line x1="447.5" y1="305.5" x2="447.5" y2="457.9" stroke="#cccccc" stroke-width="1" stroke-dasharray="2,2"/>
<line x1="482.5" y1="305.5" x2="482.5" y2="457.9" stroke="#cccccc" stroke-width="1" stroke-dasharray="2,2"/>
<line x1="166.4" y1="330.5" x2="517.4" y2="330.5" stroke="#cccccc" stroke-width="1" stroke-dasharray="2.3,1.7"/>
<line x1="166.4" y1="356.5" x2="517.4" y2="356.5" stroke="#cccccc" stroke-width="1" stroke-dasharray="2.3,1.7"/>
<line x1="166.4" y1="381.5" x2="517.4" y2="381.5" stroke="#cccccc" stroke-width="1" stroke-dasharray="2.3,1.7"/>
<line x1="166.4" y1="407.5" x2="517.4" y2="407.5" stroke="#cccccc" stroke-width="1" stroke-dasharray="2.3,1.7"/>
<line x1="166.4" y1="432.5" x2="517.4" y2="432.5" stroke="#cccccc" stroke-width="1" stroke-dasharray="2.3,1.7"/>
<rect x="166.5" y="305.5" width="351" height="152" fill="none" stroke="#b0b0b0" stroke-width="1"/>
<clipPath id="cl280.2"><rect x="166.4" y="305.5" width="351" height="152.4"/></clipPath>
<g clip-path="url(#cl280.2)">
<polyline points="150.10,322.40 151.20,322.42 152.24,322.50 153.32,322.69 154.54,323.01 156.00,323.50 157.74,324.23 159.70,325.17 161.81,326.23 164.00,327.31 166.20,328.30 168.43,329.23 170.73,330.16 173.09,331.07 175.48,331.92 177.90,332.70 180.42,333.46 183.06,334.21 185.69,334.88 188.18,335.37 190.40,335.60 192.35,335.50 194.10,335.12 195.68,334.58 197.10,333.97 198.40,333.40 199.40,332.93 200.08,332.49 200.70,331.99 201.52,331.35 202.80,330.50 204.74,329.27 207.17,327.71 209.78,326.07 212.26,324.59 214.30,323.50 215.81,322.87 216.99,322.53 217.98,322.40 218.94,322.38 220.00,322.40 221.10,322.42 222.14,322.50 223.22,322.69 224.44,323.01 225.90,323.50 227.64,324.23 229.60,325.17 231.71,326.23 233.90,327.31 236.10,328.30 238.33,329.23 240.63,330.16 242.99,331.07 245.38,331.92 247.80,332.70 250.32,333.46 252.96,334.21 255.59,334.88 258.08,335.37 260.30,335.60 262.25,335.50 264.00,335.12 265.58,334.58 267.00,333.97 268.30,333.40 269.30,332.93 269.98,332.49 270.60,331.99 271.42,331.35 272.70,330.50 274.64,329.27 277.07,327.71 279.68,326.07 282.16,324.59 284.20,323.50 285.71,322.87 286.89,322.53 287.88,322.40 288.84,322.38 289.90,322.40 291.00,322.42 292.04,322.50 293.12,322.69 294.34,323.01 295.80,323.50 297.54,324.23 299.50,325.17 301.61,326.23 303.80,327.31 306.00,328.30 308.23,329.23 310.53,330.16 312.89,331.07 315.28,331.92 317.70,332.70 320.22,333.46 322.86,334.21 325.49,334.88 327.98,335.37 330.20,335.60 332.15,335.50 333.90,335.12 335.48,334.58 336.90,333.97 338.20,333.40 339.20,332.93 339.88,332.49 340.50,331.99 341.32,331.35 342.60,330.50 344.54,329.27 346.97,327.71 349.58,326.07 352.06,324.59 354.10,323.50 355.61,322.87 356.79,322.53 357.78,322.40 358.74,322.38 359.80,322.40 360.90,322.42 361.94,322.50 363.02,322.69 364.24,323.01 365.70,323.50 367.44,324.23 369.40,325.17 371.51,326.23 373.70,327.31 375.90,328.30 378.13,329.23 380.43,330.16 382.79,331.07 385.18,331.92 387.60,332.70 390.12,333.46 392.76,334.21 395.39,334.88 397.88,335.37 400.10,335.60 402.05,335.50 403.80,335.12 405.38,334.58 406.80,333.97 408.10,333.40 409.10,332.93 409.78,332.49 410.40,331.99 411.22,331.35 412.50,330.50 414.44,329.27 416.87,327.71 419.48,326.07 421.96,324.59 424.00,323.50 425.51,322.87 426.69,322.53 427.68,322.40 428.64,322.38 429.70,322.40 430.80,322.42 431.84,322.50 432.92,322.69 434.14,323.01 435.60,323.50 437.34,324.23 439.30,325.17 441.41,326.23 443.60,327.31 445.80,328.30 448.03,329.23 450.33,330.16 452.69,331.07 455.08,331.92 457.50,332.70 460.02,333.46 462.66,334.21 465.29,334.88 467.78,335.37 470.00,335.60 471.95,335.50 473.70,335.12 475.28,334.58 476.70,333.97 478.00,333.40 479.00,332.93 479.68,332.49 480.30,331.99 481.12,331.35 482.40,330.50 484.34,329.27 486.77,327.71 489.38,326.07 491.86,324.59 493.90,323.50 495.41,322.87 496.59,322.53 497.58,322.40 498.54,322.38 499.60,322.40 500.70,322.42 501.74,322.50 502.82,322.69 504.04,323.01 505.50,323.50 507.24,324.23 509.20,325.17 511.31,326.23 513.50,327.31 515.70,328.30 517.93,329.23 520.23,330.16 522.59,331.07 524.98,331.92 527.40,332.70 529.92,333.46" fill="none" stroke="#e8e8e8" stroke-width="1.0" />
<polyline points="150.00,381.20 113.10,381.20 135.80,365.30 138.60,365.10 142.40,366.40 154.10,381.20 183.50,381.20 206.20,365.30 209.00,365.10 212.80,366.40 224.50,381.20 253.90,381.20 276.60,365.30 279.40,365.10 283.20,366.40 294.90,381.20 324.30,381.20 347.00,365.30 349.80,365.10 353.60,366.40 365.30,381.20 394.70,381.20 417.40,365.30 420.20,365.10 424.00,366.40 435.70,381.20 465.10,381.20 487.80,365.30 490.60,365.10 494.40,366.40 506.10,381.20 535.50,381.20 558.20,365.30 561.00,365.10 564.80,366.40 576.50,381.20 605.90,381.20 628.60,365.30 631.40,365.10 635.20,366.40 646.90,381.20 530.00,381.20" fill="none" stroke="#e8e8e8" stroke-width="1.0" />
<polyline points="160.00,381.50 520.00,381.50" fill="none" stroke="#e8e8e8" stroke-width="1.4" />
</g>
<rect x="162" y="463.2" width="361" height="11" fill="url(#chk)" />
<rect x="158.5" y="466.2" width="10" height="7.5" fill="#404040" />
<rect x="158.5" y="466.2" width="9" height="6.5" fill="#ffffff" />
<rect x="159.5" y="467.2" width="8" height="5.5" fill="#808080" />
<rect x="159.5" y="467.2" width="7" height="4.5" fill="#d4d0c8" />
<polygon points="165,467.7 165,472.2 161.5,469.9" fill="#ff0000"/>
<rect x="486.3" y="465.2" width="10.5" height="8.8" fill="#404040" />
<rect x="486.3" y="465.2" width="9.5" height="7.800000000000001" fill="#ffffff" />
<rect x="487.3" y="466.2" width="8.5" height="6.800000000000001" fill="#808080" />
<rect x="487.3" y="466.2" width="7.5" height="5.800000000000001" fill="#d4d0c8" />
<rect x="514.4" y="465.2" width="10.4" height="8.8" fill="#404040" />
<rect x="514.4" y="465.2" width="9.4" height="7.800000000000001" fill="#ffffff" />
<rect x="515.4" y="466.2" width="8.4" height="6.800000000000001" fill="#808080" />
<rect x="515.4" y="466.2" width="7.4" height="5.800000000000001" fill="#d4d0c8" />
<polygon points="517.8,467.2 517.8,471.7 521.3,469.4" fill="#ff0000"/>
<rect x="159.2" y="477.2" width="38.8" height="38" fill="#ffffff" />
<rect x="159.2" y="477.2" width="37.8" height="37" fill="#808080" />
<rect x="160.2" y="478.2" width="36.8" height="36" fill="#d4d0c8" />
<rect x="160.2" y="478.2" width="35.8" height="35" fill="#404040" />
<rect x="161.2" y="479.2" width="35.8" height="35" fill="#d4d0c8" />
<rect x="161.2" y="479.2" width="34.8" height="34" fill="#d4d0c8" />
<text x="163" y="489.9" font-family="Liberation Sans" font-size="8.2" fill="#000" font-weight="normal" font-style="normal" text-anchor="start" textLength="8.5" lengthAdjust="spacingAndGlyphs" >T1</text>
<text x="163" y="499.0" font-family="Liberation Sans" font-size="8.2" fill="#000" font-weight="normal" font-style="normal" text-anchor="start" textLength="8.5" lengthAdjust="spacingAndGlyphs" >T2</text>
<text x="162.5" y="512.2" font-family="Liberation Sans" font-size="8.2" fill="#000" font-weight="normal" font-style="normal" text-anchor="start" textLength="17.5" lengthAdjust="spacingAndGlyphs" >T2-T1</text>
<rect x="175.4" y="481.0" width="9.7" height="10" fill="#404040" />
<rect x="175.4" y="481.0" width="8.7" height="9" fill="#ffffff" />
<rect x="176.4" y="482.0" width="7.699999999999999" height="8" fill="#808080" />
<rect x="176.4" y="482.0" width="6.699999999999999" height="7" fill="#d4d0c8" />
<rect x="185.1" y="481.0" width="10.4" height="10" fill="#404040" />
<rect x="185.1" y="481.0" width="9.4" height="9" fill="#ffffff" />
<rect x="186.1" y="482.0" width="8.4" height="8" fill="#808080" />
<rect x="186.1" y="482.0" width="7.4" height="7" fill="#d4d0c8" />
<path d="M177.5,486.0 l3,-3 v2 h3 v2 h-3 v2 z" fill="#000"/>
<path d="M193.5,486.0 l-3,-3 v2 h-3 v2 h3 v2 z" fill="#000"/>
<rect x="175.4" y="492.5" width="9.7" height="10" fill="#404040" />
<rect x="175.4" y="492.5" width="8.7" height="9" fill="#ffffff" />
<rect x="176.4" y="493.5" width="7.699999999999999" height="8" fill="#808080" />
<rect x="176.4" y="493.5" width="6.699999999999999" height="7" fill="#d4d0c8" />
<rect x="185.1" y="492.5" width="10.4" height="10" fill="#404040" />
<rect x="185.1" y="492.5" width="9.4" height="9" fill="#ffffff" />
<rect x="186.1" y="493.5" width="8.4" height="8" fill="#808080" />
<rect x="186.1" y="493.5" width="7.4" height="7" fill="#d4d0c8" />
<path d="M177.5,497.5 l3,-3 v2 h3 v2 h-3 v2 z" fill="#000"/>
<path d="M193.5,497.5 l-3,-3 v2 h-3 v2 h3 v2 z" fill="#000"/>
<rect x="199" y="477.2" width="214.3" height="38" fill="#ffffff" />
<rect x="199" y="477.2" width="213.3" height="37" fill="#808080" />
<rect x="200" y="478.2" width="212.3" height="36" fill="#d4d0c8" />
<rect x="200" y="478.2" width="211.3" height="35" fill="#404040" />
<rect x="201" y="479.2" width="211.3" height="35" fill="#d4d0c8" />
<rect x="201" y="479.2" width="210.3" height="34" fill="#ffffff" />
<text x="222.2" y="485.1" font-family="Liberation Sans" font-size="7.6" fill="#1a1a1a" font-weight="normal" font-style="normal" text-anchor="middle" textLength="16.5" lengthAdjust="spacingAndGlyphs" >Time</text>
<text x="275.5" y="485.1" font-family="Liberation Sans" font-size="7.6" fill="#1a1a1a" font-weight="normal" font-style="normal" text-anchor="middle" textLength="34.6" lengthAdjust="spacingAndGlyphs" >Channel_A</text>
<text x="326.5" y="485.1" font-family="Liberation Sans" font-size="7.6" fill="#1a1a1a" font-weight="normal" font-style="normal" text-anchor="middle" textLength="35" lengthAdjust="spacingAndGlyphs" >Channel_B</text>
<text x="221" y="493.63" font-family="Liberation Sans" font-size="7.6" fill="#1a1a1a" font-weight="normal" font-style="normal" text-anchor="middle" textLength="23.8" lengthAdjust="spacingAndGlyphs" >3.096 s</text>
<text x="274.3" y="493.63" font-family="Liberation Sans" font-size="7.6" fill="#1a1a1a" font-weight="normal" font-style="normal" text-anchor="middle" textLength="26.6" lengthAdjust="spacingAndGlyphs" >-1.586 V</text>
<text x="326.5" y="493.63" font-family="Liberation Sans" font-size="7.6" fill="#1a1a1a" font-weight="normal" font-style="normal" text-anchor="middle" textLength="40" lengthAdjust="spacingAndGlyphs" >213.896 mV</text>
<text x="221" y="502.15999999999997" font-family="Liberation Sans" font-size="7.6" fill="#1a1a1a" font-weight="normal" font-style="normal" text-anchor="middle" textLength="23.8" lengthAdjust="spacingAndGlyphs" >3.096 s</text>
<text x="274.3" y="502.15999999999997" font-family="Liberation Sans" font-size="7.6" fill="#1a1a1a" font-weight="normal" font-style="normal" text-anchor="middle" textLength="26.6" lengthAdjust="spacingAndGlyphs" >-1.586 V</text>
<text x="326.5" y="502.15999999999997" font-family="Liberation Sans" font-size="7.6" fill="#1a1a1a" font-weight="normal" font-style="normal" text-anchor="middle" textLength="40" lengthAdjust="spacingAndGlyphs" >213.896 mV</text>
<text x="221" y="510.69" font-family="Liberation Sans" font-size="7.6" fill="#1a1a1a" font-weight="normal" font-style="normal" text-anchor="middle" textLength="23.8" lengthAdjust="spacingAndGlyphs" >0.000 s</text>
<text x="275.2" y="510.69" font-family="Liberation Sans" font-size="7.6" fill="#1a1a1a" font-weight="normal" font-style="normal" text-anchor="middle" textLength="24.8" lengthAdjust="spacingAndGlyphs" >0.000 V</text>
<text x="326.5" y="510.69" font-family="Liberation Sans" font-size="7.6" fill="#1a1a1a" font-weight="normal" font-style="normal" text-anchor="middle" textLength="24.8" lengthAdjust="spacingAndGlyphs" >0.000 V</text>
<rect x="418.4" y="480.7" width="41.200000000000045" height="14.699999999999989" fill="#404040" />
<rect x="418.4" y="480.7" width="40.200000000000045" height="13.699999999999989" fill="#ffffff" />
<rect x="419.4" y="481.7" width="39.200000000000045" height="12.699999999999989" fill="#808080" />
<rect x="419.4" y="481.7" width="38.200000000000045" height="11.699999999999989" fill="#d4d0c8" />
<text x="439.0" y="491.04999999999995" font-family="Liberation Sans" font-size="8.2" fill="#ff0000" font-weight="normal" font-style="normal" text-anchor="middle" textLength="26.5" lengthAdjust="spacingAndGlyphs" >Reverse</text>
<rect x="418.4" y="499.5" width="41.200000000000045" height="14.299999999999955" fill="#404040" />
<rect x="418.4" y="499.5" width="40.200000000000045" height="13.299999999999955" fill="#ffffff" />
<rect x="419.4" y="500.5" width="39.200000000000045" height="12.299999999999955" fill="#808080" />
<rect x="419.4" y="500.5" width="38.200000000000045" height="11.299999999999955" fill="#d4d0c8" />
<text x="439.0" y="509.65" font-family="Liberation Sans" font-size="8.2" fill="#ff0000" font-weight="normal" font-style="normal" text-anchor="middle" textLength="15.2" lengthAdjust="spacingAndGlyphs" >Save</text>
<text x="465" y="516.8" font-family="Liberation Sans" font-size="8.2" fill="#000" font-weight="normal" font-style="normal" text-anchor="start" textLength="36.8" lengthAdjust="spacingAndGlyphs" >Ext. trigger</text>
<path d="M506.5962,516.0038000000001 A3.4,3.4 0 0 1 511.4038,511.19620000000003" fill="none" stroke="#303030" stroke-width="1"/>
<path d="M511.4038,511.19620000000003 A3.4,3.4 0 0 1 506.5962,516.0038000000001" fill="none" stroke="#ffffff" stroke-width="1"/>
<rect x="158.5" y="524.7" width="85.7" height="47.69999999999999" fill="none" stroke="#808080" stroke-width="1"/>
<rect x="159.5" y="525.7" width="85.7" height="47.69999999999999" fill="none" stroke="#ffffff" stroke-width="1"/>
<rect x="163.5" y="520.7" width="37" height="8" fill="#d4d0c8" />
<text x="164.5" y="528.0" font-family="Liberation Sans" font-size="8.3" fill="#000" font-weight="normal" font-style="normal" text-anchor="start" textLength="34" lengthAdjust="spacingAndGlyphs" >Timebase</text>
<text x="160.5" y="538.8" font-family="Liberation Sans" font-size="8.2" fill="#000" font-weight="normal" font-style="normal" text-anchor="start" textLength="21.5" lengthAdjust="spacingAndGlyphs" >Scale:</text>
<rect x="184.7" y="529.7" width="56.5" height="11.699999999999932" fill="#ffffff" />
<rect x="184.7" y="529.7" width="55.5" height="10.699999999999932" fill="#808080" />
<rect x="185.7" y="530.7" width="54.5" height="9.699999999999932" fill="#d4d0c8" />
<rect x="185.7" y="530.7" width="53.5" height="8.699999999999932" fill="#404040" />
<rect x="186.7" y="531.7" width="53.5" height="8.699999999999932" fill="#d4d0c8" />
<rect x="186.7" y="531.7" width="52.5" height="7.699999999999932" fill="#ffffff" />
<text x="187.7" y="538.55" font-family="Liberation Sans" font-size="8.2" fill="#000" font-weight="normal" font-style="normal" text-anchor="start" textLength="27.5" lengthAdjust="spacingAndGlyphs" >5 ms/Div</text>
<text x="160.5" y="552.8" font-family="Liberation Sans" font-size="8.2" fill="#000" font-weight="normal" font-style="normal" text-anchor="start" textLength="39" lengthAdjust="spacingAndGlyphs" >X pos.(Div):</text>
<rect x="201.3" y="544.0" width="39.89999999999998" height="11.399999999999977" fill="#ffffff" />
<rect x="201.3" y="544.0" width="38.89999999999998" height="10.399999999999977" fill="#808080" />
<rect x="202.3" y="545.0" width="37.89999999999998" height="9.399999999999977" fill="#d4d0c8" />
<rect x="202.3" y="545.0" width="36.89999999999998" height="8.399999999999977" fill="#404040" />
<rect x="203.3" y="546.0" width="36.89999999999998" height="8.399999999999977" fill="#d4d0c8" />
<rect x="203.3" y="546.0" width="35.89999999999998" height="7.399999999999977" fill="#ffffff" />
<text x="204.3" y="552.7" font-family="Liberation Sans" font-size="8.2" fill="#000" font-weight="normal" font-style="normal" text-anchor="start" textLength="4.5" lengthAdjust="spacingAndGlyphs" >0</text>
<rect x="163.1" y="558.2" width="16.200000000000017" height="13.0" fill="#ffffff" />
<rect x="163.1" y="558.2" width="15.200000000000017" height="12.0" fill="#404040" />
<rect x="164.1" y="559.2" width="14.200000000000017" height="11.0" fill="#d4d0c8" />
<rect x="164.1" y="559.2" width="13.200000000000017" height="10.0" fill="#808080" />
<rect x="165.1" y="560.2" width="12.200000000000017" height="9.0" fill="#ece9e4" />
<text x="171.2" y="567.7" font-family="Liberation Sans" font-size="8.2" fill="#ff0000" font-weight="normal" font-style="normal" text-anchor="middle" textLength="11" lengthAdjust="spacingAndGlyphs" >Y/T</text>
<rect x="179.3" y="558.2" width="19.299999999999983" height="13.0" fill="#404040" />
<rect x="179.3" y="558.2" width="18.299999999999983" height="12.0" fill="#ffffff" />
<rect x="180.3" y="559.2" width="17.299999999999983" height="11.0" fill="#808080" />
<rect x="180.3" y="559.2" width="16.299999999999983" height="10.0" fill="#d4d0c8" />
<text x="188.95" y="567.7" font-family="Liberation Sans" font-size="8.2" fill="#ff0000" font-weight="normal" font-style="normal" text-anchor="middle" textLength="12.5" lengthAdjust="spacingAndGlyphs" >Add</text>
<rect x="200.2" y="558.2" width="17.400000000000006" height="13.0" fill="#404040" />
<rect x="200.2" y="558.2" width="16.400000000000006" height="12.0" fill="#ffffff" />
<rect x="201.2" y="559.2" width="15.400000000000006" height="11.0" fill="#808080" />
<rect x="201.2" y="559.2" width="14.400000000000006" height="10.0" fill="#d4d0c8" />
<text x="208.89999999999998" y="567.7" font-family="Liberation Sans" font-size="8.2" fill="#ff0000" font-weight="normal" font-style="normal" text-anchor="middle" textLength="11" lengthAdjust="spacingAndGlyphs" >B/A</text>
<rect x="219.4" y="558.2" width="19.0" height="13.0" fill="#404040" />
<rect x="219.4" y="558.2" width="18.0" height="12.0" fill="#ffffff" />
<rect x="220.4" y="559.2" width="17.0" height="11.0" fill="#808080" />
<rect x="220.4" y="559.2" width="16.0" height="10.0" fill="#d4d0c8" />
<text x="228.9" y="567.7" font-family="Liberation Sans" font-size="8.2" fill="#ff0000" font-weight="normal" font-style="normal" text-anchor="middle" textLength="11" lengthAdjust="spacingAndGlyphs" >A/B</text>
<rect x="246.9" y="524.7" width="84.5" height="47.69999999999999" fill="none" stroke="#808080" stroke-width="1"/>
<rect x="247.9" y="525.7" width="84.5" height="47.69999999999999" fill="none" stroke="#ffffff" stroke-width="1"/>
<rect x="251.9" y="520.7" width="38" height="8" fill="#d4d0c8" />
<text x="252.9" y="528.0" font-family="Liberation Sans" font-size="8.3" fill="#000" font-weight="normal" font-style="normal" text-anchor="start" textLength="35" lengthAdjust="spacingAndGlyphs" >Channel A</text>
<text x="248.7" y="538.8" font-family="Liberation Sans" font-size="8.2" fill="#000" font-weight="normal" font-style="normal" text-anchor="start" textLength="21.5" lengthAdjust="spacingAndGlyphs" >Scale:</text>
<rect x="273.0" y="529.7" width="56.39999999999998" height="11.699999999999932" fill="#ffffff" />
<rect x="273.0" y="529.7" width="55.39999999999998" height="10.699999999999932" fill="#808080" />
<rect x="274.0" y="530.7" width="54.39999999999998" height="9.699999999999932" fill="#d4d0c8" />
<rect x="274.0" y="530.7" width="53.39999999999998" height="8.699999999999932" fill="#404040" />
<rect x="275.0" y="531.7" width="53.39999999999998" height="8.699999999999932" fill="#d4d0c8" />
<rect x="275.0" y="531.7" width="52.39999999999998" height="7.699999999999932" fill="#ffffff" />
<text x="276.0" y="538.55" font-family="Liberation Sans" font-size="8.2" fill="#000" font-weight="normal" font-style="normal" text-anchor="start" textLength="36" lengthAdjust="spacingAndGlyphs" >100  V/Div</text>
<text x="248.7" y="552.8" font-family="Liberation Sans" font-size="8.2" fill="#000" font-weight="normal" font-style="normal" text-anchor="start" textLength="39.5" lengthAdjust="spacingAndGlyphs" >Y pos.(Div):</text>
<rect x="290.2" y="543.7" width="39.19999999999999" height="11.699999999999932" fill="#ffffff" />
<rect x="290.2" y="543.7" width="38.19999999999999" height="10.699999999999932" fill="#808080" />
<rect x="291.2" y="544.7" width="37.19999999999999" height="9.699999999999932" fill="#d4d0c8" />
<rect x="291.2" y="544.7" width="36.19999999999999" height="8.699999999999932" fill="#404040" />
<rect x="292.2" y="545.7" width="36.19999999999999" height="8.699999999999932" fill="#d4d0c8" />
<rect x="292.2" y="545.7" width="35.19999999999999" height="7.699999999999932" fill="#ffffff" />
<text x="293.2" y="552.55" font-family="Liberation Sans" font-size="8.2" fill="#000" font-weight="normal" font-style="normal" text-anchor="start" textLength="4.5" lengthAdjust="spacingAndGlyphs" >0</text>
<rect x="248.3" y="557.9" width="16.599999999999966" height="13.399999999999977" fill="#404040" />
<rect x="248.3" y="557.9" width="15.599999999999966" height="12.399999999999977" fill="#ffffff" />
<rect x="249.3" y="558.9" width="14.599999999999966" height="11.399999999999977" fill="#808080" />
<rect x="249.3" y="558.9" width="13.599999999999966" height="10.399999999999977" fill="#d4d0c8" />
<text x="256.6" y="567.5999999999999" font-family="Liberation Sans" font-size="8.2" fill="#ff0000" font-weight="normal" font-style="normal" text-anchor="middle" textLength="11" lengthAdjust="spacingAndGlyphs" >AC</text>
<rect x="265.7" y="557.9" width="16.0" height="13.399999999999977" fill="#404040" />
<rect x="265.7" y="557.9" width="15.0" height="12.399999999999977" fill="#ffffff" />
<rect x="266.7" y="558.9" width="14.0" height="11.399999999999977" fill="#808080" />
<rect x="266.7" y="558.9" width="13.0" height="10.399999999999977" fill="#d4d0c8" />
<text x="273.7" y="567.5999999999999" font-family="Liberation Sans" font-size="8.2" fill="#ff0000" font-weight="normal" font-style="normal" text-anchor="middle" textLength="4.5" lengthAdjust="spacingAndGlyphs" >0</text>
<rect x="282.9" y="557.9" width="17.600000000000023" height="13.399999999999977" fill="#ffffff" />
<rect x="282.9" y="557.9" width="16.600000000000023" height="12.399999999999977" fill="#404040" />
<rect x="283.9" y="558.9" width="15.600000000000023" height="11.399999999999977" fill="#d4d0c8" />
<rect x="283.9" y="558.9" width="14.600000000000023" height="10.399999999999977" fill="#808080" />
<rect x="284.9" y="559.9" width="13.600000000000023" height="9.399999999999977" fill="#ece9e4" />
<text x="291.7" y="567.5999999999999" font-family="Liberation Sans" font-size="8.2" fill="#ff0000" font-weight="normal" font-style="normal" text-anchor="middle" textLength="11" lengthAdjust="spacingAndGlyphs" >DC</text>
<path d="M320.4962,567.0038 A3.4,3.4 0 0 1 325.30379999999997,562.1961999999999" fill="none" stroke="#303030" stroke-width="1"/>
<path d="M325.30379999999997,562.1961999999999 A3.4,3.4 0 0 1 320.4962,567.0038" fill="none" stroke="#ffffff" stroke-width="1"/>
<circle cx="322.9" cy="564.5999999999999" r="1.3" fill="#606060"/>
<rect x="332.8" y="524.7" width="84.5" height="47.69999999999999" fill="none" stroke="#808080" stroke-width="1"/>
<rect x="333.8" y="525.7" width="84.5" height="47.69999999999999" fill="none" stroke="#ffffff" stroke-width="1"/>
<rect x="337.8" y="520.7" width="38" height="8" fill="#d4d0c8" />
<text x="338.8" y="528.0" font-family="Liberation Sans" font-size="8.3" fill="#000" font-weight="normal" font-style="normal" text-anchor="start" textLength="35" lengthAdjust="spacingAndGlyphs" >Channel B</text>
<text x="334.6" y="538.8" font-family="Liberation Sans" font-size="8.2" fill="#000" font-weight="normal" font-style="normal" text-anchor="start" textLength="21.5" lengthAdjust="spacingAndGlyphs" >Scale:</text>
<rect x="358.9" y="529.7" width="56.400000000000034" height="11.699999999999932" fill="#ffffff" />
<rect x="358.9" y="529.7" width="55.400000000000034" height="10.699999999999932" fill="#808080" />
<rect x="359.9" y="530.7" width="54.400000000000034" height="9.699999999999932" fill="#d4d0c8" />
<rect x="359.9" y="530.7" width="53.400000000000034" height="8.699999999999932" fill="#404040" />
<rect x="360.9" y="531.7" width="53.400000000000034" height="8.699999999999932" fill="#d4d0c8" />
<rect x="360.9" y="531.7" width="52.400000000000034" height="7.699999999999932" fill="#ffffff" />
<text x="361.9" y="538.55" font-family="Liberation Sans" font-size="8.2" fill="#000" font-weight="normal" font-style="normal" text-anchor="start" textLength="40" lengthAdjust="spacingAndGlyphs" >100 mV/Div</text>
<text x="334.6" y="552.8" font-family="Liberation Sans" font-size="8.2" fill="#000" font-weight="normal" font-style="normal" text-anchor="start" textLength="39.5" lengthAdjust="spacingAndGlyphs" >Y pos.(Div):</text>
<rect x="376.1" y="543.7" width="39.19999999999999" height="11.699999999999932" fill="#ffffff" />
<rect x="376.1" y="543.7" width="38.19999999999999" height="10.699999999999932" fill="#808080" />
<rect x="377.1" y="544.7" width="37.19999999999999" height="9.699999999999932" fill="#d4d0c8" />
<rect x="377.1" y="544.7" width="36.19999999999999" height="8.699999999999932" fill="#404040" />
<rect x="378.1" y="545.7" width="36.19999999999999" height="8.699999999999932" fill="#d4d0c8" />
<rect x="378.1" y="545.7" width="35.19999999999999" height="7.699999999999932" fill="#ffffff" />
<text x="379.1" y="552.55" font-family="Liberation Sans" font-size="8.2" fill="#000" font-weight="normal" font-style="normal" text-anchor="start" textLength="4.5" lengthAdjust="spacingAndGlyphs" >0</text>
<rect x="334.8" y="557.9" width="15.599999999999966" height="13.399999999999977" fill="#404040" />
<rect x="334.8" y="557.9" width="14.599999999999966" height="12.399999999999977" fill="#ffffff" />
<rect x="335.8" y="558.9" width="13.599999999999966" height="11.399999999999977" fill="#808080" />
<rect x="335.8" y="558.9" width="12.599999999999966" height="10.399999999999977" fill="#d4d0c8" />
<text x="342.6" y="567.5999999999999" font-family="Liberation Sans" font-size="8.2" fill="#ff0000" font-weight="normal" font-style="normal" text-anchor="middle" textLength="11" lengthAdjust="spacingAndGlyphs" >AC</text>
<rect x="351.4" y="557.9" width="14.400000000000034" height="13.399999999999977" fill="#404040" />
<rect x="351.4" y="557.9" width="13.400000000000034" height="12.399999999999977" fill="#ffffff" />
<rect x="352.4" y="558.9" width="12.400000000000034" height="11.399999999999977" fill="#808080" />
<rect x="352.4" y="558.9" width="11.400000000000034" height="10.399999999999977" fill="#d4d0c8" />
<text x="358.6" y="567.5999999999999" font-family="Liberation Sans" font-size="8.2" fill="#ff0000" font-weight="normal" font-style="normal" text-anchor="middle" textLength="4.5" lengthAdjust="spacingAndGlyphs" >0</text>
<rect x="366.4" y="557.9" width="17.400000000000034" height="13.399999999999977" fill="#ffffff" />
<rect x="366.4" y="557.9" width="16.400000000000034" height="12.399999999999977" fill="#404040" />
<rect x="367.4" y="558.9" width="15.400000000000034" height="11.399999999999977" fill="#d4d0c8" />
<rect x="367.4" y="558.9" width="14.400000000000034" height="10.399999999999977" fill="#808080" />
<rect x="368.4" y="559.9" width="13.400000000000034" height="9.399999999999977" fill="#ece9e4" />
<text x="375.1" y="567.5999999999999" font-family="Liberation Sans" font-size="8.2" fill="#ff0000" font-weight="normal" font-style="normal" text-anchor="middle" textLength="11" lengthAdjust="spacingAndGlyphs" >DC</text>
<rect x="384.6" y="557.9" width="13.199999999999989" height="13.399999999999977" fill="#404040" />
<rect x="384.6" y="557.9" width="12.199999999999989" height="12.399999999999977" fill="#ffffff" />
<rect x="385.6" y="558.9" width="11.199999999999989" height="11.399999999999977" fill="#808080" />
<rect x="385.6" y="558.9" width="10.199999999999989" height="10.399999999999977" fill="#d4d0c8" />
<text x="391.20000000000005" y="567.5999999999999" font-family="Liberation Sans" font-size="8.2" fill="#ff0000" font-weight="normal" font-style="normal" text-anchor="middle" textLength="3" lengthAdjust="spacingAndGlyphs" >-</text>
<path d="M410.19620000000003,567.0038 A3.4,3.4 0 0 1 415.0038,562.1961999999999" fill="none" stroke="#303030" stroke-width="1"/>
<path d="M415.0038,562.1961999999999 A3.4,3.4 0 0 1 410.19620000000003,567.0038" fill="none" stroke="#ffffff" stroke-width="1"/>
<circle cx="412.6" cy="564.5999999999999" r="1.3" fill="#606060"/>
<rect x="420" y="524.7" width="103" height="47.69999999999999" fill="none" stroke="#808080" stroke-width="1"/>
<rect x="421" y="525.7" width="103" height="47.69999999999999" fill="none" stroke="#ffffff" stroke-width="1"/>
<rect x="425" y="520.7" width="25" height="8" fill="#d4d0c8" />
<text x="426" y="528.0" font-family="Liberation Sans" font-size="8.3" fill="#000" font-weight="normal" font-style="normal" text-anchor="start" textLength="22" lengthAdjust="spacingAndGlyphs" >Trigger</text>
<text x="422" y="540.7" font-family="Liberation Sans" font-size="8.2" fill="#000" font-weight="normal" font-style="normal" text-anchor="start" textLength="19.5" lengthAdjust="spacingAndGlyphs" >Edge:</text>
<rect x="451.2" y="531.8" width="11.4" height="11.3" fill="#ffffff" />
<rect x="451.2" y="531.8" width="10.4" height="10.3" fill="#404040" />
<rect x="452.2" y="532.8" width="9.4" height="9.3" fill="#d4d0c8" />
<rect x="452.2" y="532.8" width="8.4" height="8.3" fill="#808080" />
<rect x="453.2" y="533.8" width="7.4" height="7.300000000000001" fill="#ece9e4" />
<path d="M454.3,540.2 h2.8 v-5.5 h2.8 M455.5,537.5 h3.2" fill="none" stroke="#000" stroke-width="1.1"/>
<rect x="462.6" y="531.8" width="11.8" height="11.3" fill="#404040" />
<rect x="462.6" y="531.8" width="10.8" height="10.3" fill="#ffffff" />
<rect x="463.6" y="532.8" width="9.8" height="9.3" fill="#808080" />
<rect x="463.6" y="532.8" width="8.8" height="8.3" fill="#d4d0c8" />
<path d="M465.8,534.7 h2.8 v5.5 h2.8 M467,537.5 h3.2" fill="none" stroke="#000" stroke-width="1.1"/>
<rect x="477.5" y="531.8" width="11.5" height="11.299999999999955" fill="#ffffff" />
<rect x="477.5" y="531.8" width="10.5" height="10.299999999999955" fill="#404040" />
<rect x="478.5" y="532.8" width="9.5" height="9.299999999999955" fill="#d4d0c8" />
<rect x="478.5" y="532.8" width="8.5" height="8.299999999999955" fill="#808080" />
<rect x="479.5" y="533.8" width="7.5" height="7.2999999999999545" fill="#ece9e4" />
<text x="483.25" y="540.4499999999999" font-family="Liberation Sans" font-size="8.2" fill="#a0a0a0" font-weight="normal" font-style="normal" text-anchor="middle" textLength="6" lengthAdjust="spacingAndGlyphs" >A</text>
<rect x="489" y="531.8" width="13" height="11.299999999999955" fill="#404040" />
<rect x="489" y="531.8" width="12" height="10.299999999999955" fill="#ffffff" />
<rect x="490" y="532.8" width="11" height="9.299999999999955" fill="#808080" />
<rect x="490" y="532.8" width="10" height="8.299999999999955" fill="#d4d0c8" />
<text x="495.5" y="540.4499999999999" font-family="Liberation Sans" font-size="8.2" fill="#a0a0a0" font-weight="normal" font-style="normal" text-anchor="middle" textLength="6" lengthAdjust="spacingAndGlyphs" >B</text>
<rect x="502" y="531.8" width="16.200000000000045" height="11.299999999999955" fill="#404040" />
<rect x="502" y="531.8" width="15.200000000000045" height="10.299999999999955" fill="#ffffff" />
<rect x="503" y="532.8" width="14.200000000000045" height="9.299999999999955" fill="#808080" />
<rect x="503" y="532.8" width="13.200000000000045" height="8.299999999999955" fill="#d4d0c8" />
<text x="510.1" y="540.4499999999999" font-family="Liberation Sans" font-size="8.2" fill="#a0a0a0" font-weight="normal" font-style="normal" text-anchor="middle" textLength="11" lengthAdjust="spacingAndGlyphs" >Ext</text>
<text x="422" y="553.8" font-family="Liberation Sans" font-size="8.2" fill="#000" font-weight="normal" font-style="normal" text-anchor="start" textLength="20.5" lengthAdjust="spacingAndGlyphs" >Level:</text>
<rect x="451.2" y="546.0" width="44.80000000000001" height="11.200000000000045" fill="#ffffff" />
<rect x="451.2" y="546.0" width="43.80000000000001" height="10.200000000000045" fill="#808080" />
<rect x="452.2" y="547.0" width="42.80000000000001" height="9.200000000000045" fill="#d4d0c8" />
<rect x="452.2" y="547.0" width="41.80000000000001" height="8.200000000000045" fill="#404040" />
<rect x="453.2" y="548.0" width="41.80000000000001" height="8.200000000000045" fill="#d4d0c8" />
<rect x="453.2" y="548.0" width="40.80000000000001" height="7.2000000000000455" fill="#ffffff" />
<text x="454.2" y="554.6" font-family="Liberation Sans" font-size="8.2" fill="#000" font-weight="normal" font-style="normal" text-anchor="start" textLength="4.5" lengthAdjust="spacingAndGlyphs" >0</text>
<rect x="497.5" y="546.0" width="20.299999999999955" height="11.200000000000045" fill="#ffffff" />
<rect x="497.5" y="546.0" width="19.299999999999955" height="10.200000000000045" fill="#808080" />
<rect x="498.5" y="547.0" width="18.299999999999955" height="9.200000000000045" fill="#d4d0c8" />
<rect x="498.5" y="547.0" width="17.299999999999955" height="8.200000000000045" fill="#404040" />
<rect x="499.5" y="548.0" width="17.299999999999955" height="8.200000000000045" fill="#d4d0c8" />
<rect x="499.5" y="548.0" width="16.299999999999955" height="7.2000000000000455" fill="#ffffff" />
<text x="500.5" y="554.6" font-family="Liberation Sans" font-size="8.2" fill="#000" font-weight="normal" font-style="normal" text-anchor="start" textLength="6" lengthAdjust="spacingAndGlyphs" >V</text>
<rect x="422.4" y="557.9" width="24.900000000000034" height="13.399999999999977" fill="#404040" />
<rect x="422.4" y="557.9" width="23.900000000000034" height="12.399999999999977" fill="#ffffff" />
<rect x="423.4" y="558.9" width="22.900000000000034" height="11.399999999999977" fill="#808080" />
<rect x="423.4" y="558.9" width="21.900000000000034" height="10.399999999999977" fill="#d4d0c8" />
<text x="434.85" y="567.5999999999999" font-family="Liberation Sans" font-size="8.2" fill="#ff0000" font-weight="normal" font-style="normal" text-anchor="middle" textLength="18.5" lengthAdjust="spacingAndGlyphs" >Single</text>
<rect x="447.3" y="557.9" width="29.30000000000001" height="13.399999999999977" fill="#404040" />
<rect x="447.3" y="557.9" width="28.30000000000001" height="12.399999999999977" fill="#ffffff" />
<rect x="448.3" y="558.9" width="27.30000000000001" height="11.399999999999977" fill="#808080" />
<rect x="448.3" y="558.9" width="26.30000000000001" height="10.399999999999977" fill="#d4d0c8" />
<text x="461.95000000000005" y="567.5999999999999" font-family="Liberation Sans" font-size="8.2" fill="#ff0000" font-weight="normal" font-style="normal" text-anchor="middle" textLength="23.5" lengthAdjust="spacingAndGlyphs" >Normal</text>
<rect x="476.6" y="557.9" width="20.399999999999977" height="13.399999999999977" fill="#404040" />
<rect x="476.6" y="557.9" width="19.399999999999977" height="12.399999999999977" fill="#ffffff" />
<rect x="477.6" y="558.9" width="18.399999999999977" height="11.399999999999977" fill="#808080" />
<rect x="477.6" y="558.9" width="17.399999999999977" height="10.399999999999977" fill="#d4d0c8" />
<text x="486.8" y="567.5999999999999" font-family="Liberation Sans" font-size="8.2" fill="#ff0000" font-weight="normal" font-style="normal" text-anchor="middle" textLength="15.5" lengthAdjust="spacingAndGlyphs" >Auto</text>
<rect x="497" y="557.9" width="22.899999999999977" height="13.399999999999977" fill="#ffffff" />
<rect x="497" y="557.9" width="21.899999999999977" height="12.399999999999977" fill="#404040" />
<rect x="498" y="558.9" width="20.899999999999977" height="11.399999999999977" fill="#d4d0c8" />
<rect x="498" y="558.9" width="19.899999999999977" height="10.399999999999977" fill="#808080" />
<rect x="499" y="559.9" width="18.899999999999977" height="9.399999999999977" fill="#ece9e4" />
<text x="508.45" y="567.5999999999999" font-family="Liberation Sans" font-size="8.2" fill="#ff0000" font-weight="normal" font-style="normal" text-anchor="middle" textLength="17.5" lengthAdjust="spacingAndGlyphs" >None</text>
<rect x="156" y="280.2" width="2.5" height="294" fill="#d4d0c8" />
<rect x="156" y="280.2" width="1" height="294" fill="#ffffff" />
<rect x="-80" y="172.1" width="369" height="295" fill="#d4d0c8" />
<rect x="-80" y="172.1" width="369" height="1" fill="#ffffff" />
<rect x="288" y="172.1" width="1" height="295" fill="#404040" />
<rect x="287" y="173.1" width="1" height="294" fill="#808080" />
<rect x="-80" y="172.1" width="1" height="295" fill="#ffffff" />
<rect x="-80" y="466.1" width="369" height="1" fill="#404040" />
<rect x="-79" y="465.1" width="367" height="1" fill="#808080" />
<rect x="-77.5" y="174.6" width="364.2" height="15" fill="#a6caf0" />
<text x="-68.5" y="185.9" font-family="Liberation Sans" font-size="10.3" fill="#ff0000" font-weight="normal" font-style="normal" text-anchor="start" textLength="79.5" lengthAdjust="spacingAndGlyphs" >Oscilloscope-XSC1</text>
<rect x="272.2" y="176.29999999999998" width="13.1" height="11.2" fill="#404040" />
<rect x="272.2" y="176.29999999999998" width="12.1" height="10.2" fill="#ffffff" />
<rect x="273.2" y="177.29999999999998" width="11.1" height="9.2" fill="#808080" />
<rect x="273.2" y="177.29999999999998" width="10.1" height="8.2" fill="#d4d0c8" />
<path d="M275.6,178.9 L281.8,185.1 M281.8,178.9 L275.6,185.1" stroke="#ff0000" stroke-width="1.8"/>
<rect x="-77.5" y="189.6" width="364.5" height="1.7" fill="#d4d0c8" />
<rect x="-76" y="191.29999999999998" width="361" height="163.3" fill="#000000" />
<line x1="-36.5" y1="197.8" x2="-36.5" y2="349.6" stroke="#cccccc" stroke-width="1" stroke-dasharray="2,2"/>
<line x1="-1.5" y1="197.8" x2="-1.5" y2="349.6" stroke="#cccccc" stroke-width="1" stroke-dasharray="2,2"/>
<line x1="33.5" y1="197.8" x2="33.5" y2="349.6" stroke="#cccccc" stroke-width="1" stroke-dasharray="2,2"/>
<line x1="69.5" y1="197.8" x2="69.5" y2="349.6" stroke="#cccccc" stroke-width="1" stroke-dasharray="2,2"/>
<line x1="104.5" y1="197.8" x2="104.5" y2="349.6" stroke="#cccccc" stroke-width="1" stroke-dasharray="2,2"/>
<line x1="139.5" y1="197.8" x2="139.5" y2="349.6" stroke="#cccccc" stroke-width="1" stroke-dasharray="2,2"/>
<line x1="174.5" y1="197.8" x2="174.5" y2="349.6" stroke="#cccccc" stroke-width="1" stroke-dasharray="2,2"/>
<line x1="209.5" y1="197.8" x2="209.5" y2="349.6" stroke="#cccccc" stroke-width="1" stroke-dasharray="2,2"/>
<line x1="244.5" y1="197.8" x2="244.5" y2="349.6" stroke="#cccccc" stroke-width="1" stroke-dasharray="2,2"/>
<line x1="-71.4" y1="223.5" x2="279.6" y2="223.5" stroke="#cccccc" stroke-width="1" stroke-dasharray="2.3,1.7"/>
<line x1="-71.4" y1="248.5" x2="279.6" y2="248.5" stroke="#cccccc" stroke-width="1" stroke-dasharray="2.3,1.7"/>
<line x1="-71.4" y1="273.5" x2="279.6" y2="273.5" stroke="#cccccc" stroke-width="1" stroke-dasharray="2.3,1.7"/>
<line x1="-71.4" y1="299.5" x2="279.6" y2="299.5" stroke="#cccccc" stroke-width="1" stroke-dasharray="2.3,1.7"/>
<line x1="-71.4" y1="324.5" x2="279.6" y2="324.5" stroke="#cccccc" stroke-width="1" stroke-dasharray="2.3,1.7"/>
<rect x="-71.5" y="197.5" width="351" height="152" fill="none" stroke="#b0b0b0" stroke-width="1"/>
<clipPath id="cl172.1"><rect x="-71.4" y="197.8" width="351" height="151.8"/></clipPath>
<g clip-path="url(#cl172.1)">
<polyline points="-80.00,268.65 -79.50,269.56 -79.00,270.47 -78.50,271.39 -78.00,272.30 -77.50,273.22 -77.00,274.14 -76.50,275.05 -76.00,275.97 -75.50,276.89 -75.00,277.80 -74.50,278.71 -74.00,279.62 -73.50,280.53 -73.00,281.43 -72.50,282.33 -72.00,283.23 -71.50,284.12 -71.00,285.00 -70.50,285.88 -70.00,286.76 -69.50,287.62 -69.00,288.49 -68.50,289.34 -68.00,290.19 -67.50,291.02 -67.00,291.85 -66.50,292.67 -66.00,293.49 -65.50,294.29 -65.00,295.08 -64.50,295.86 -64.00,296.63 -63.50,297.39 -63.00,298.14 -62.50,298.87 -62.00,299.59 -61.50,300.30 -61.00,301.00 -60.50,301.68 -60.00,302.35 -59.50,303.01 -59.00,303.65 -58.50,304.27 -58.00,304.88 -57.50,305.48 -57.00,306.06 -56.50,306.62 -56.00,307.17 -55.50,307.70 -55.00,308.21 -54.50,308.71 -54.00,309.19 -53.50,309.65 -53.00,310.10 -52.50,310.52 -52.00,310.93 -51.50,311.32 -51.00,311.69 -50.50,312.04 -50.00,312.37 -49.50,312.69 -49.00,312.98 -48.50,313.25 -48.00,313.51 -47.50,313.74 -47.00,313.96 -46.50,314.15 -46.00,314.33 -45.50,314.48 -45.00,314.62 -44.50,314.73 -44.00,314.83 -43.50,314.90 -43.00,314.95 -42.50,314.99 -42.00,315.00 -41.50,314.99 -41.00,314.96 -40.50,314.91 -40.00,314.84 -39.50,314.75 -39.00,314.64 -38.50,314.51 -38.00,314.36 -37.50,314.19 -37.00,314.00 -36.50,313.79 -36.00,313.56 -35.50,313.31 -35.00,313.04 -34.50,312.75 -34.00,312.44 -33.50,312.11 -33.00,311.76 -32.50,311.39 -32.00,311.01 -31.50,310.60 -31.00,310.18 -30.50,309.74 -30.00,309.28 -29.50,308.81 -29.00,308.31 -28.50,307.80 -28.00,307.28 -27.50,306.73 -27.00,306.17 -26.50,305.60 -26.00,305.00 -25.50,304.40 -25.00,303.77 -24.50,303.14 -24.00,302.48 -23.50,301.82 -23.00,301.14 -22.50,300.44 -22.00,299.74 -21.50,299.02 -21.00,298.28 -20.50,297.54 -20.00,296.78 -19.50,296.02 -19.00,295.24 -18.50,294.45 -18.00,293.65 -17.50,292.84 -17.00,292.02 -16.50,291.19 -16.00,290.35 -15.50,289.51 -15.00,288.66 -14.50,287.80 -14.00,286.93 -13.50,286.06 -13.00,285.18 -12.50,284.29 -12.00,283.40 -11.50,282.51 -11.00,281.61 -10.50,280.71 -10.00,279.80 -9.50,278.89 -9.00,277.98 -8.50,277.07 -8.00,276.15 -7.50,275.24 -7.00,274.32 -6.50,273.40 -6.00,272.49 -5.50,271.57 -5.00,270.66 -4.50,269.74 -4.00,268.83 -3.50,267.93 -3.00,267.02 -2.50,266.12 -2.00,265.22 -1.50,264.33 -1.00,263.44 -0.50,262.56 0.00,261.68 0.50,260.81 1.00,259.94 1.50,259.09 2.00,258.24 2.50,257.39 3.00,256.56 3.50,255.73 4.00,254.92 4.50,254.11 5.00,253.32 5.50,252.53 6.00,251.75 6.50,250.99 7.00,250.24 7.50,249.49 8.00,248.77 8.50,248.05 9.00,247.35 9.50,246.66 10.00,245.98 10.50,245.32 11.00,244.67 11.50,244.04 12.00,243.42 12.50,242.82 13.00,242.23 13.50,241.66 14.00,241.10 14.50,240.56 15.00,240.04 15.50,239.54 16.00,239.05 16.50,238.58 17.00,238.12 17.50,237.69 18.00,237.27 18.50,236.87 19.00,236.50 19.50,236.13 20.00,235.79 20.50,235.47 21.00,235.17 21.50,234.88 22.00,234.62 22.50,234.37 23.00,234.15 23.50,233.94 24.00,233.76 24.50,233.59 25.00,233.45 25.50,233.32 26.00,233.22 26.50,233.13 27.00,233.07 27.50,233.03 28.00,233.00 28.50,233.00 29.00,233.02 29.50,233.06 30.00,233.12 30.50,233.20 31.00,233.30 31.50,233.42 32.00,233.56 32.50,233.72 33.00,233.90 33.50,234.10 34.00,234.32 34.50,234.57 35.00,234.83 35.50,235.11 36.00,235.41 36.50,235.73 37.00,236.06 37.50,236.42 38.00,236.80 38.50,237.19 39.00,237.60 39.50,238.04 40.00,238.49 40.50,238.95 41.00,239.44 41.50,239.94 42.00,240.46 42.50,240.99 43.00,241.54 43.50,242.11 44.00,242.70 44.50,243.30 45.00,243.91 45.50,244.54 46.00,245.19 46.50,245.85 47.00,246.52 47.50,247.21 48.00,247.91 48.50,248.62 49.00,249.35 49.50,250.09 50.00,250.84 50.50,251.60 51.00,252.37 51.50,253.16 52.00,253.95 52.50,254.76 53.00,255.57 53.50,256.39 54.00,257.23 54.50,258.07 55.00,258.92 55.50,259.77 56.00,260.63 56.50,261.50 57.00,262.38 57.50,263.26 58.00,264.15 58.50,265.04 59.00,265.94 59.50,266.84 60.00,267.74 60.50,268.65 61.00,269.56 61.50,270.47 62.00,271.39 62.50,272.30 63.00,273.22 63.50,274.14 64.00,275.05 64.50,275.97 65.00,276.89 65.50,277.80 66.00,278.71 66.50,279.62 67.00,280.53 67.50,281.43 68.00,282.33 68.50,283.23 69.00,284.12 69.50,285.00 70.00,285.88 70.50,286.76 71.00,287.62 71.50,288.49 72.00,289.34 72.50,290.19 73.00,291.02 73.50,291.85 74.00,292.67 74.50,293.49 75.00,294.29 75.50,295.08 76.00,295.86 76.50,296.63 77.00,297.39 77.50,298.14 78.00,298.87 78.50,299.59 79.00,300.30 79.50,301.00 80.00,301.68 80.50,302.35 81.00,303.01 81.50,303.65 82.00,304.27 82.50,304.88 83.00,305.48 83.50,306.06 84.00,306.62 84.50,307.17 85.00,307.70 85.50,308.21 86.00,308.71 86.50,309.19 87.00,309.65 87.50,310.10 88.00,310.52 88.50,310.93 89.00,311.32 89.50,311.69 90.00,312.04 90.50,312.37 91.00,312.69 91.50,312.98 92.00,313.25 92.50,313.51 93.00,313.74 93.50,313.96 94.00,314.15 94.50,314.33 95.00,314.48 95.50,314.62 96.00,314.73 96.50,314.83 97.00,314.90 97.50,314.95 98.00,314.99 98.50,315.00 99.00,314.99 99.50,314.96 100.00,314.91 100.50,314.84 101.00,314.75 101.50,314.64 102.00,314.51 102.50,314.36 103.00,314.19 103.50,314.00 104.00,313.79 104.50,313.56 105.00,313.31 105.50,313.04 106.00,312.75 106.50,312.44 107.00,312.11 107.50,311.76 108.00,311.39 108.50,311.01 109.00,310.60 109.50,310.18 110.00,309.74 110.50,309.28 111.00,308.81 111.50,308.31 112.00,307.80 112.50,307.28 113.00,306.73 113.50,306.17 114.00,305.60 114.50,305.00 115.00,304.40 115.50,303.77 116.00,303.14 116.50,302.48 117.00,301.82 117.50,301.14 118.00,300.44 118.50,299.74 119.00,299.02 119.50,298.28 120.00,297.54 120.50,296.78 121.00,296.02 121.50,295.24 122.00,294.45 122.50,293.65 123.00,292.84 123.50,292.02 124.00,291.19 124.50,290.35 125.00,289.51 125.50,288.66 126.00,287.80 126.50,286.93 127.00,286.06 127.50,285.18 128.00,284.29 128.50,283.40 129.00,282.51 129.50,281.61 130.00,280.71 130.50,279.80 131.00,278.89 131.50,277.98 132.00,277.07 132.50,276.15 133.00,275.24 133.50,274.32 134.00,273.40 134.50,272.49 135.00,271.57 135.50,270.66 136.00,269.74 136.50,268.83 137.00,267.93 137.50,267.02 138.00,266.12 138.50,265.22 139.00,264.33 139.50,263.44 140.00,262.56 140.50,261.68 141.00,260.81 141.50,259.94 142.00,259.09 142.50,258.24 143.00,257.39 143.50,256.56 144.00,255.73 144.50,254.92 145.00,254.11 145.50,253.32 146.00,252.53 146.50,251.75 147.00,250.99 147.50,250.24 148.00,249.49 148.50,248.77 149.00,248.05 149.50,247.35 150.00,246.66 150.50,245.98 151.00,245.32 151.50,244.67 152.00,244.04 152.50,243.42 153.00,242.82 153.50,242.23 154.00,241.66 154.50,241.10 155.00,240.56 155.50,240.04 156.00,239.54 156.50,239.05 157.00,238.58 157.50,238.12 158.00,237.69 158.50,237.27 159.00,236.87 159.50,236.50 160.00,236.13 160.50,235.79 161.00,235.47 161.50,235.17 162.00,234.88 162.50,234.62 163.00,234.37 163.50,234.15 164.00,233.94 164.50,233.76 165.00,233.59 165.50,233.45 166.00,233.32 166.50,233.22 167.00,233.13 167.50,233.07 168.00,233.03 168.50,233.00 169.00,233.00 169.50,233.02 170.00,233.06 170.50,233.12 171.00,233.20 171.50,233.30 172.00,233.42 172.50,233.56 173.00,233.72 173.50,233.90 174.00,234.10 174.50,234.32 175.00,234.57 175.50,234.83 176.00,235.11 176.50,235.41 177.00,235.73 177.50,236.06 178.00,236.42 178.50,236.80 179.00,237.19 179.50,237.60 180.00,238.04 180.50,238.49 181.00,238.95 181.50,239.44 182.00,239.94 182.50,240.46 183.00,240.99 183.50,241.54 184.00,242.11 184.50,242.70 185.00,243.30 185.50,243.91 186.00,244.54 186.50,245.19 187.00,245.85 187.50,246.52 188.00,247.21 188.50,247.91 189.00,248.62 189.50,249.35 190.00,250.09 190.50,250.84 191.00,251.60 191.50,252.37 192.00,253.16 192.50,253.95 193.00,254.76 193.50,255.57 194.00,256.39 194.50,257.23 195.00,258.07 195.50,258.92 196.00,259.77 196.50,260.63 197.00,261.50 197.50,262.38 198.00,263.26 198.50,264.15 199.00,265.04 199.50,265.94 200.00,266.84 200.50,267.74 201.00,268.65 201.50,269.56 202.00,270.47 202.50,271.39 203.00,272.30 203.50,273.22 204.00,274.14 204.50,275.05 205.00,275.97 205.50,276.89 206.00,277.80 206.50,278.71 207.00,279.62 207.50,280.53 208.00,281.43 208.50,282.33 209.00,283.23 209.50,284.12 210.00,285.00 210.50,285.88 211.00,286.76 211.50,287.62 212.00,288.49 212.50,289.34 213.00,290.19 213.50,291.02 214.00,291.85 214.50,292.67 215.00,293.49 215.50,294.29 216.00,295.08 216.50,295.86 217.00,296.63 217.50,297.39 218.00,298.14 218.50,298.87 219.00,299.59 219.50,300.30 220.00,301.00 220.50,301.68 221.00,302.35 221.50,303.01 222.00,303.65 222.50,304.27 223.00,304.88 223.50,305.48 224.00,306.06 224.50,306.62 225.00,307.17 225.50,307.70 226.00,308.21 226.50,308.71 227.00,309.19 227.50,309.65 228.00,310.10 228.50,310.52 229.00,310.93 229.50,311.32 230.00,311.69 230.50,312.04 231.00,312.37 231.50,312.69 232.00,312.98 232.50,313.25 233.00,313.51 233.50,313.74 234.00,313.96 234.50,314.15 235.00,314.33 235.50,314.48 236.00,314.62 236.50,314.73 237.00,314.83 237.50,314.90 238.00,314.95 238.50,314.99 239.00,315.00 239.50,314.99 240.00,314.96 240.50,314.91 241.00,314.84 241.50,314.75 242.00,314.64 242.50,314.51 243.00,314.36 243.50,314.19 244.00,314.00 244.50,313.79 245.00,313.56 245.50,313.31 246.00,313.04 246.50,312.75 247.00,312.44 247.50,312.11 248.00,311.76 248.50,311.39 249.00,311.01 249.50,310.60 250.00,310.18 250.50,309.74 251.00,309.28 251.50,308.81 252.00,308.31 252.50,307.80 253.00,307.28 253.50,306.73 254.00,306.17 254.50,305.60 255.00,305.00 255.50,304.40 256.00,303.77 256.50,303.14 257.00,302.48 257.50,301.82 258.00,301.14 258.50,300.44 259.00,299.74 259.50,299.02 260.00,298.28 260.50,297.54 261.00,296.78 261.50,296.02 262.00,295.24 262.50,294.45 263.00,293.65 263.50,292.84 264.00,292.02 264.50,291.19 265.00,290.35 265.50,289.51 266.00,288.66 266.50,287.80 267.00,286.93 267.50,286.06 268.00,285.18 268.50,284.29 269.00,283.40 269.50,282.51 270.00,281.61 270.50,280.71 271.00,279.80 271.50,278.89 272.00,277.98 272.50,277.07 273.00,276.15 273.50,275.24 274.00,274.32 274.50,273.40 275.00,272.49 275.50,271.57 276.00,270.66 276.50,269.74 277.00,268.83 277.50,267.93 278.00,267.02 278.50,266.12 279.00,265.22 279.50,264.33 280.00,263.44 280.50,262.56 281.00,261.68 281.50,260.81 282.00,259.94 282.50,259.09 283.00,258.24 283.50,257.39 284.00,256.56 284.50,255.73 285.00,254.92 285.50,254.11 286.00,253.32 286.50,252.53 287.00,251.75 287.50,250.99 288.00,250.24 288.50,249.49 289.00,248.77 289.50,248.05" fill="none" stroke="#e8e8e8" stroke-width="1.0" />
<polyline points="-141.00,247.90 -128.20,244.20 -119.00,245.50 -117.20,249.70 -116.30,267.00 -115.40,269.80 -92.50,298.20 -71.50,299.60 -60.50,301.80 -49.50,302.20 -47.70,300.90 -46.80,279.90 -45.90,279.00 -23.00,249.70 -2.00,247.30 -0.50,247.90 12.30,244.20 21.50,245.50 23.30,249.70 24.20,267.00 25.10,269.80 48.00,298.20 69.00,299.60 80.00,301.80 91.00,302.20 92.80,300.90 93.70,279.90 94.60,279.00 117.50,249.70 138.50,247.30 140.00,247.90 152.80,244.20 162.00,245.50 163.80,249.70 164.70,267.00 165.60,269.80 188.50,298.20 209.50,299.60 220.50,301.80 231.50,302.20 233.30,300.90 234.20,279.90 235.10,279.00 258.00,249.70 279.00,247.30 280.50,247.90 293.30,244.20 302.50,245.50 304.30,249.70 305.20,267.00 306.10,269.80 329.00,298.20 350.00,299.60 361.00,301.80 372.00,302.20 373.80,300.90 374.70,279.90 375.60,279.00 398.50,249.70 419.50,247.30 421.00,247.90 433.80,244.20 443.00,245.50 444.80,249.70 445.70,267.00 446.60,269.80 469.50,298.20 490.50,299.60 501.50,301.80 512.50,302.20 514.30,300.90 515.20,279.90 516.10,279.00 539.00,249.70 560.00,247.30" fill="none" stroke="#e8e8e8" stroke-width="1.0" />
<polyline points="-80.00,273.79 -78.00,274.04 -76.00,273.90 -74.00,274.08 -72.00,274.10 -70.00,273.65 -68.00,273.61 -66.00,274.27 -64.00,273.81 -62.00,273.79 -60.00,274.40 -58.00,273.98 -56.00,274.27 -54.00,273.98 -52.00,274.11 -50.00,273.72 -48.00,274.11 -46.00,274.29 -44.00,274.02 -42.00,274.19 -40.00,274.14 -38.00,273.65 -36.00,274.21 -34.00,274.07 -32.00,273.84 -30.00,273.62 -28.00,274.29 -26.00,273.98 -24.00,274.18 -22.00,274.30 -20.00,274.17 -18.00,274.34 -16.00,273.92 -14.00,274.24 -12.00,273.96 -10.00,274.35 -8.00,274.30 -6.00,273.68 -4.00,273.71 -2.00,273.77 0.00,274.37 2.00,273.95 4.00,274.10 6.00,273.84 8.00,274.01 10.00,273.91 12.00,273.88 14.00,274.07 16.00,274.07 18.00,274.32 20.00,274.15 22.00,274.34 24.00,274.29 26.00,274.39 28.00,274.14 30.00,273.73 32.00,274.29 34.00,274.37 36.00,274.32 38.00,274.06 40.00,274.17 42.00,273.77 44.00,274.27 46.00,274.06 48.00,273.83 50.00,273.65 52.00,274.28 54.00,274.39 56.00,273.67 58.00,274.24 60.00,273.93 62.00,273.72 64.00,273.84 66.00,274.22 68.00,274.30 70.00,273.64 72.00,274.09 74.00,273.64 76.00,274.17 78.00,273.86 80.00,274.30 82.00,274.38 84.00,274.00 86.00,274.40 88.00,273.85 90.00,273.66 92.00,274.08 94.00,273.63 96.00,273.76 98.00,273.93 100.00,274.09 102.00,273.72 104.00,273.63 106.00,274.29 108.00,273.85 110.00,274.37 112.00,274.32 114.00,273.90 116.00,273.97 118.00,274.02 120.00,274.12 122.00,274.08 124.00,274.05 126.00,274.10 128.00,274.35 130.00,274.01 132.00,273.94 134.00,274.18 136.00,273.79 138.00,273.84 140.00,274.38 142.00,274.02 144.00,274.04 146.00,273.61 148.00,273.93 150.00,274.06 152.00,273.62 154.00,274.09 156.00,274.11 158.00,273.65 160.00,274.10 162.00,273.97 164.00,274.14 166.00,273.88 168.00,274.17 170.00,274.19 172.00,273.62 174.00,273.65 176.00,274.14 178.00,274.37 180.00,273.80 182.00,273.97 184.00,274.07 186.00,273.86 188.00,273.89 190.00,273.85 192.00,273.90 194.00,274.08 196.00,273.84 198.00,273.90 200.00,274.22 202.00,273.62 204.00,274.06 206.00,274.19 208.00,273.85 210.00,273.78 212.00,274.24 214.00,273.79 216.00,273.75 218.00,273.95 220.00,274.16 222.00,273.68 224.00,273.86 226.00,273.87 228.00,274.27 230.00,273.95 232.00,274.28 234.00,273.74 236.00,273.87 238.00,274.12 240.00,274.31 242.00,273.96 244.00,273.78 246.00,273.70 248.00,274.02 250.00,273.75 252.00,274.25 254.00,274.27 256.00,273.75 258.00,273.82 260.00,274.25 262.00,274.11 264.00,274.25 266.00,273.88 268.00,273.70 270.00,273.83 272.00,274.24 274.00,273.82 276.00,273.88 278.00,273.93 280.00,273.94 282.00,273.93 284.00,274.34 286.00,273.72 288.00,273.60" fill="none" stroke="#e8e8e8" stroke-width="1.3" />
</g>
<rect x="-76" y="355.1" width="361" height="11" fill="url(#chk)" />
<rect x="252.2" y="357.1" width="10.5" height="8.8" fill="#404040" />
<rect x="252.2" y="357.1" width="9.5" height="7.800000000000001" fill="#ffffff" />
<rect x="253.2" y="358.1" width="8.5" height="6.800000000000001" fill="#808080" />
<rect x="253.2" y="358.1" width="7.5" height="5.800000000000001" fill="#d4d0c8" />
<rect x="276.4" y="357.1" width="10.4" height="8.8" fill="#404040" />
<rect x="276.4" y="357.1" width="9.4" height="7.800000000000001" fill="#ffffff" />
<rect x="277.4" y="358.1" width="8.4" height="6.800000000000001" fill="#808080" />
<rect x="277.4" y="358.1" width="7.4" height="5.800000000000001" fill="#d4d0c8" />
<polygon points="279.8,359.1 279.8,363.6 283.3,361.29999999999995" fill="#ff0000"/>
<rect x="-78.8" y="369.1" width="38.8" height="38" fill="#ffffff" />
<rect x="-78.8" y="369.1" width="37.8" height="37" fill="#808080" />
<rect x="-77.8" y="370.1" width="36.8" height="36" fill="#d4d0c8" />
<rect x="-77.8" y="370.1" width="35.8" height="35" fill="#404040" />
<rect x="-76.8" y="371.1" width="35.8" height="35" fill="#d4d0c8" />
<rect x="-76.8" y="371.1" width="34.8" height="34" fill="#d4d0c8" />
<text x="-75" y="381.79999999999995" font-family="Liberation Sans" font-size="8.2" fill="#000" font-weight="normal" font-style="normal" text-anchor="start" textLength="8.5" lengthAdjust="spacingAndGlyphs" >T1</text>
<text x="-75" y="390.9" font-family="Liberation Sans" font-size="8.2" fill="#000" font-weight="normal" font-style="normal" text-anchor="start" textLength="8.5" lengthAdjust="spacingAndGlyphs" >T2</text>
<text x="-75.5" y="404.1" font-family="Liberation Sans" font-size="8.2" fill="#000" font-weight="normal" font-style="normal" text-anchor="start" textLength="17.5" lengthAdjust="spacingAndGlyphs" >T2-T1</text>
<rect x="-62.6" y="372.9" width="9.7" height="10" fill="#404040" />
<rect x="-62.6" y="372.9" width="8.7" height="9" fill="#ffffff" />
<rect x="-61.6" y="373.9" width="7.699999999999999" height="8" fill="#808080" />
<rect x="-61.6" y="373.9" width="6.699999999999999" height="7" fill="#d4d0c8" />
<rect x="-52.9" y="372.9" width="10.4" height="10" fill="#404040" />
<rect x="-52.9" y="372.9" width="9.4" height="9" fill="#ffffff" />
<rect x="-51.9" y="373.9" width="8.4" height="8" fill="#808080" />
<rect x="-51.9" y="373.9" width="7.4" height="7" fill="#d4d0c8" />
<path d="M-60.5,377.9 l3,-3 v2 h3 v2 h-3 v2 z" fill="#000"/>
<path d="M-44.5,377.9 l-3,-3 v2 h-3 v2 h3 v2 z" fill="#000"/>
<rect x="-62.6" y="384.4" width="9.7" height="10" fill="#404040" />
<rect x="-62.6" y="384.4" width="8.7" height="9" fill="#ffffff" />
<rect x="-61.6" y="385.4" width="7.699999999999999" height="8" fill="#808080" />
<rect x="-61.6" y="385.4" width="6.699999999999999" height="7" fill="#d4d0c8" />
<rect x="-52.9" y="384.4" width="10.4" height="10" fill="#404040" />
<rect x="-52.9" y="384.4" width="9.4" height="9" fill="#ffffff" />
<rect x="-51.9" y="385.4" width="8.4" height="8" fill="#808080" />
<rect x="-51.9" y="385.4" width="7.4" height="7" fill="#d4d0c8" />
<path d="M-60.5,389.4 l3,-3 v2 h3 v2 h-3 v2 z" fill="#000"/>
<path d="M-44.5,389.4 l-3,-3 v2 h-3 v2 h3 v2 z" fill="#000"/>
<rect x="-39" y="369.1" width="214.3" height="38" fill="#ffffff" />
<rect x="-39" y="369.1" width="213.3" height="37" fill="#808080" />
<rect x="-38" y="370.1" width="212.3" height="36" fill="#d4d0c8" />
<rect x="-38" y="370.1" width="211.3" height="35" fill="#404040" />
<rect x="-37" y="371.1" width="211.3" height="35" fill="#d4d0c8" />
<rect x="-37" y="371.1" width="210.3" height="34" fill="#ffffff" />
<text x="37.8" y="377.0" font-family="Liberation Sans" font-size="7.6" fill="#1a1a1a" font-weight="normal" font-style="normal" text-anchor="middle" textLength="34.6" lengthAdjust="spacingAndGlyphs" >Channel_A</text>
<text x="91.30000000000001" y="377.0" font-family="Liberation Sans" font-size="7.6" fill="#1a1a1a" font-weight="normal" font-style="normal" text-anchor="middle" textLength="34.2" lengthAdjust="spacingAndGlyphs" >Channel_B</text>
<text x="36.599999999999994" y="385.53" font-family="Liberation Sans" font-size="7.6" fill="#1a1a1a" font-weight="normal" font-style="normal" text-anchor="middle" textLength="31.1" lengthAdjust="spacingAndGlyphs" >-73.171 V</text>
<text x="91.30000000000001" y="385.53" font-family="Liberation Sans" font-size="7.6" fill="#1a1a1a" font-weight="normal" font-style="normal" text-anchor="middle" textLength="40" lengthAdjust="spacingAndGlyphs" >-203.918 mV</text>
<text x="36.599999999999994" y="394.06" font-family="Liberation Sans" font-size="7.6" fill="#1a1a1a" font-weight="normal" font-style="normal" text-anchor="middle" textLength="31.1" lengthAdjust="spacingAndGlyphs" >-73.171 V</text>
<text x="91.30000000000001" y="394.06" font-family="Liberation Sans" font-size="7.6" fill="#1a1a1a" font-weight="normal" font-style="normal" text-anchor="middle" textLength="40" lengthAdjust="spacingAndGlyphs" >-203.918 mV</text>
<text x="37.400000000000006" y="402.59000000000003" font-family="Liberation Sans" font-size="7.6" fill="#1a1a1a" font-weight="normal" font-style="normal" text-anchor="middle" textLength="24.4" lengthAdjust="spacingAndGlyphs" >0.000 V</text>
<text x="91.30000000000001" y="402.59000000000003" font-family="Liberation Sans" font-size="7.6" fill="#1a1a1a" font-weight="normal" font-style="normal" text-anchor="middle" textLength="24.4" lengthAdjust="spacingAndGlyphs" >0.000 V</text>
<rect x="180.39999999999998" y="372.6" width="41.200000000000045" height="14.699999999999932" fill="#404040" />
<rect x="180.39999999999998" y="372.6" width="40.200000000000045" height="13.699999999999932" fill="#ffffff" />
<rect x="181.39999999999998" y="373.6" width="39.200000000000045" height="12.699999999999932" fill="#808080" />
<rect x="181.39999999999998" y="373.6" width="38.200000000000045" height="11.699999999999932" fill="#d4d0c8" />
<text x="201.0" y="382.95" font-family="Liberation Sans" font-size="8.2" fill="#ff0000" font-weight="normal" font-style="normal" text-anchor="middle" textLength="26.5" lengthAdjust="spacingAndGlyphs" >Reverse</text>
<rect x="180.39999999999998" y="391.4" width="41.200000000000045" height="14.300000000000011" fill="#404040" />
<rect x="180.39999999999998" y="391.4" width="40.200000000000045" height="13.300000000000011" fill="#ffffff" />
<rect x="181.39999999999998" y="392.4" width="39.200000000000045" height="12.300000000000011" fill="#808080" />
<rect x="181.39999999999998" y="392.4" width="38.200000000000045" height="11.300000000000011" fill="#d4d0c8" />
<text x="201.0" y="401.54999999999995" font-family="Liberation Sans" font-size="8.2" fill="#ff0000" font-weight="normal" font-style="normal" text-anchor="middle" textLength="15.2" lengthAdjust="spacingAndGlyphs" >Save</text>
<text x="227" y="408.7" font-family="Liberation Sans" font-size="8.2" fill="#000" font-weight="normal" font-style="normal" text-anchor="start" textLength="36.8" lengthAdjust="spacingAndGlyphs" >Ext. trigger</text>
<path d="M268.5962,407.9038 A3.4,3.4 0 0 1 273.4038,403.0962" fill="none" stroke="#303030" stroke-width="1"/>
<path d="M273.4038,403.0962 A3.4,3.4 0 0 1 268.5962,407.9038" fill="none" stroke="#ffffff" stroke-width="1"/>
<rect x="-79.5" y="416.6" width="85.7" height="47.69999999999999" fill="none" stroke="#808080" stroke-width="1"/>
<rect x="-78.5" y="417.6" width="85.7" height="47.69999999999999" fill="none" stroke="#ffffff" stroke-width="1"/>
<rect x="-74.5" y="412.6" width="37" height="8" fill="#d4d0c8" />
<text x="-73.5" y="419.90000000000003" font-family="Liberation Sans" font-size="8.3" fill="#000" font-weight="normal" font-style="normal" text-anchor="start" textLength="34" lengthAdjust="spacingAndGlyphs" >Timebase</text>
<text x="-77.5" y="430.70000000000005" font-family="Liberation Sans" font-size="8.2" fill="#000" font-weight="normal" font-style="normal" text-anchor="start" textLength="21.5" lengthAdjust="spacingAndGlyphs" >Scale:</text>
<rect x="-53.3" y="421.6" width="56.5" height="11.699999999999932" fill="#ffffff" />
<rect x="-53.3" y="421.6" width="55.5" height="10.699999999999932" fill="#808080" />
<rect x="-52.3" y="422.6" width="54.5" height="9.699999999999932" fill="#d4d0c8" />
<rect x="-52.3" y="422.6" width="53.5" height="8.699999999999932" fill="#404040" />
<rect x="-51.3" y="423.6" width="53.5" height="8.699999999999932" fill="#d4d0c8" />
<rect x="-51.3" y="423.6" width="52.5" height="7.699999999999932" fill="#ffffff" />
<text x="-50.3" y="430.45" font-family="Liberation Sans" font-size="8.2" fill="#000" font-weight="normal" font-style="normal" text-anchor="start" textLength="27.5" lengthAdjust="spacingAndGlyphs" >5 ms/Div</text>
<text x="-77.5" y="444.70000000000005" font-family="Liberation Sans" font-size="8.2" fill="#000" font-weight="normal" font-style="normal" text-anchor="start" textLength="39" lengthAdjust="spacingAndGlyphs" >X pos.(Div):</text>
<rect x="-36.7" y="435.9" width="39.900000000000006" height="11.399999999999977" fill="#ffffff" />
<rect x="-36.7" y="435.9" width="38.900000000000006" height="10.399999999999977" fill="#808080" />
<rect x="-35.7" y="436.9" width="37.900000000000006" height="9.399999999999977" fill="#d4d0c8" />
<rect x="-35.7" y="436.9" width="36.900000000000006" height="8.399999999999977" fill="#404040" />
<rect x="-34.7" y="437.9" width="36.900000000000006" height="8.399999999999977" fill="#d4d0c8" />
<rect x="-34.7" y="437.9" width="35.900000000000006" height="7.399999999999977" fill="#ffffff" />
<text x="-33.7" y="444.59999999999997" font-family="Liberation Sans" font-size="8.2" fill="#000" font-weight="normal" font-style="normal" text-anchor="start" textLength="4.5" lengthAdjust="spacingAndGlyphs" >0</text>
<rect x="-74.9" y="450.1" width="16.200000000000003" height="13.0" fill="#ffffff" />
<rect x="-74.9" y="450.1" width="15.200000000000003" height="12.0" fill="#404040" />
<rect x="-73.9" y="451.1" width="14.200000000000003" height="11.0" fill="#d4d0c8" />
<rect x="-73.9" y="451.1" width="13.200000000000003" height="10.0" fill="#808080" />
<rect x="-72.9" y="452.1" width="12.200000000000003" height="9.0" fill="#ece9e4" />
<text x="-66.80000000000001" y="459.6" font-family="Liberation Sans" font-size="8.2" fill="#ff0000" font-weight="normal" font-style="normal" text-anchor="middle" textLength="11" lengthAdjust="spacingAndGlyphs" >Y/T</text>
<rect x="-58.7" y="450.1" width="19.300000000000004" height="13.0" fill="#404040" />
<rect x="-58.7" y="450.1" width="18.300000000000004" height="12.0" fill="#ffffff" />
<rect x="-57.7" y="451.1" width="17.300000000000004" height="11.0" fill="#808080" />
<rect x="-57.7" y="451.1" width="16.300000000000004" height="10.0" fill="#d4d0c8" />
<text x="-49.05" y="459.6" font-family="Liberation Sans" font-size="8.2" fill="#ff0000" font-weight="normal" font-style="normal" text-anchor="middle" textLength="12.5" lengthAdjust="spacingAndGlyphs" >Add</text>
<rect x="-37.8" y="450.1" width="17.4" height="13.0" fill="#404040" />
<rect x="-37.8" y="450.1" width="16.4" height="12.0" fill="#ffffff" />
<rect x="-36.8" y="451.1" width="15.399999999999999" height="11.0" fill="#808080" />
<rect x="-36.8" y="451.1" width="14.399999999999999" height="10.0" fill="#d4d0c8" />
<text x="-29.099999999999998" y="459.6" font-family="Liberation Sans" font-size="8.2" fill="#ff0000" font-weight="normal" font-style="normal" text-anchor="middle" textLength="11" lengthAdjust="spacingAndGlyphs" >B/A</text>
<rect x="-18.6" y="450.1" width="19.000000000000007" height="13.0" fill="#404040" />
<rect x="-18.6" y="450.1" width="18.000000000000007" height="12.0" fill="#ffffff" />
<rect x="-17.6" y="451.1" width="17.000000000000007" height="11.0" fill="#808080" />
<rect x="-17.6" y="451.1" width="16.000000000000007" height="10.0" fill="#d4d0c8" />
<text x="-9.099999999999998" y="459.6" font-family="Liberation Sans" font-size="8.2" fill="#ff0000" font-weight="normal" font-style="normal" text-anchor="middle" textLength="11" lengthAdjust="spacingAndGlyphs" >A/B</text>
<rect x="8.900000000000006" y="416.6" width="84.5" height="47.69999999999999" fill="none" stroke="#808080" stroke-width="1"/>
<rect x="9.900000000000006" y="417.6" width="84.5" height="47.69999999999999" fill="none" stroke="#ffffff" stroke-width="1"/>
<rect x="13.900000000000006" y="412.6" width="38" height="8" fill="#d4d0c8" />
<text x="14.900000000000006" y="419.90000000000003" font-family="Liberation Sans" font-size="8.3" fill="#000" font-weight="normal" font-style="normal" text-anchor="start" textLength="35" lengthAdjust="spacingAndGlyphs" >Channel A</text>
<text x="10.700000000000003" y="430.70000000000005" font-family="Liberation Sans" font-size="8.2" fill="#000" font-weight="normal" font-style="normal" text-anchor="start" textLength="21.5" lengthAdjust="spacingAndGlyphs" >Scale:</text>
<rect x="35.0" y="421.6" width="56.400000000000006" height="11.699999999999932" fill="#ffffff" />
<rect x="35.0" y="421.6" width="55.400000000000006" height="10.699999999999932" fill="#808080" />
<rect x="36.0" y="422.6" width="54.400000000000006" height="9.699999999999932" fill="#d4d0c8" />
<rect x="36.0" y="422.6" width="53.400000000000006" height="8.699999999999932" fill="#404040" />
<rect x="37.0" y="423.6" width="53.400000000000006" height="8.699999999999932" fill="#d4d0c8" />
<rect x="37.0" y="423.6" width="52.400000000000006" height="7.699999999999932" fill="#ffffff" />
<text x="38.0" y="430.45" font-family="Liberation Sans" font-size="8.2" fill="#000" font-weight="normal" font-style="normal" text-anchor="start" textLength="36" lengthAdjust="spacingAndGlyphs" >200  V/Div</text>
<text x="10.700000000000003" y="444.70000000000005" font-family="Liberation Sans" font-size="8.2" fill="#000" font-weight="normal" font-style="normal" text-anchor="start" textLength="39.5" lengthAdjust="spacingAndGlyphs" >Y pos.(Div):</text>
<rect x="52.19999999999999" y="435.6" width="39.20000000000002" height="11.699999999999932" fill="#ffffff" />
<rect x="52.19999999999999" y="435.6" width="38.20000000000002" height="10.699999999999932" fill="#808080" />
<rect x="53.19999999999999" y="436.6" width="37.20000000000002" height="9.699999999999932" fill="#d4d0c8" />
<rect x="53.19999999999999" y="436.6" width="36.20000000000002" height="8.699999999999932" fill="#404040" />
<rect x="54.19999999999999" y="437.6" width="36.20000000000002" height="8.699999999999932" fill="#d4d0c8" />
<rect x="54.19999999999999" y="437.6" width="35.20000000000002" height="7.699999999999932" fill="#ffffff" />
<text x="55.19999999999999" y="444.45" font-family="Liberation Sans" font-size="8.2" fill="#000" font-weight="normal" font-style="normal" text-anchor="start" textLength="4.5" lengthAdjust="spacingAndGlyphs" >0</text>
<rect x="10.300000000000011" y="451.70000000000005" width="16.599999999999994" height="12.299999999999955" fill="#ffffff" />
<rect x="10.300000000000011" y="451.70000000000005" width="15.599999999999994" height="11.299999999999955" fill="#404040" />
<rect x="11.300000000000011" y="452.70000000000005" width="14.599999999999994" height="10.299999999999955" fill="#d4d0c8" />
<rect x="11.300000000000011" y="452.70000000000005" width="13.599999999999994" height="9.299999999999955" fill="#808080" />
<rect x="12.300000000000011" y="453.70000000000005" width="12.599999999999994" height="8.299999999999955" fill="#ece9e4" />
<text x="18.60000000000001" y="460.85" font-family="Liberation Sans" font-size="8.2" fill="#ff0000" font-weight="normal" font-style="normal" text-anchor="middle" textLength="11" lengthAdjust="spacingAndGlyphs" >AC</text>
<rect x="27.700000000000003" y="451.70000000000005" width="16.0" height="12.299999999999955" fill="#404040" />
<rect x="27.700000000000003" y="451.70000000000005" width="15.0" height="11.299999999999955" fill="#ffffff" />
<rect x="28.700000000000003" y="452.70000000000005" width="14.0" height="10.299999999999955" fill="#808080" />
<rect x="28.700000000000003" y="452.70000000000005" width="13.0" height="9.299999999999955" fill="#d4d0c8" />
<text x="35.7" y="460.85" font-family="Liberation Sans" font-size="8.2" fill="#ff0000" font-weight="normal" font-style="normal" text-anchor="middle" textLength="4.5" lengthAdjust="spacingAndGlyphs" >0</text>
<rect x="44.900000000000006" y="451.70000000000005" width="17.599999999999994" height="12.299999999999955" fill="#404040" />
<rect x="44.900000000000006" y="451.70000000000005" width="16.599999999999994" height="11.299999999999955" fill="#ffffff" />
<rect x="45.900000000000006" y="452.70000000000005" width="15.599999999999994" height="10.299999999999955" fill="#808080" />
<rect x="45.900000000000006" y="452.70000000000005" width="14.599999999999994" height="9.299999999999955" fill="#d4d0c8" />
<text x="53.7" y="460.85" font-family="Liberation Sans" font-size="8.2" fill="#ff0000" font-weight="normal" font-style="normal" text-anchor="middle" textLength="11" lengthAdjust="spacingAndGlyphs" >DC</text>
<path d="M82.4962,460.2538 A3.4,3.4 0 0 1 87.30380000000001,455.44620000000003" fill="none" stroke="#303030" stroke-width="1"/>
<path d="M87.30380000000001,455.44620000000003 A3.4,3.4 0 0 1 82.4962,460.2538" fill="none" stroke="#ffffff" stroke-width="1"/>
<circle cx="84.9" cy="457.85" r="1.3" fill="#606060"/>
<rect x="94.80000000000001" y="416.6" width="84.5" height="47.69999999999999" fill="none" stroke="#808080" stroke-width="1"/>
<rect x="95.80000000000001" y="417.6" width="84.5" height="47.69999999999999" fill="none" stroke="#ffffff" stroke-width="1"/>
<rect x="99.80000000000001" y="412.6" width="38" height="8" fill="#d4d0c8" />
<text x="100.80000000000001" y="419.90000000000003" font-family="Liberation Sans" font-size="8.3" fill="#000" font-weight="normal" font-style="normal" text-anchor="start" textLength="35" lengthAdjust="spacingAndGlyphs" >Channel B</text>
<text x="96.60000000000002" y="430.70000000000005" font-family="Liberation Sans" font-size="8.2" fill="#000" font-weight="normal" font-style="normal" text-anchor="start" textLength="21.5" lengthAdjust="spacingAndGlyphs" >Scale:</text>
<rect x="120.9" y="421.6" width="56.400000000000006" height="11.699999999999932" fill="#ffffff" />
<rect x="120.9" y="421.6" width="55.400000000000006" height="10.699999999999932" fill="#808080" />
<rect x="121.9" y="422.6" width="54.400000000000006" height="9.699999999999932" fill="#d4d0c8" />
<rect x="121.9" y="422.6" width="53.400000000000006" height="8.699999999999932" fill="#404040" />
<rect x="122.9" y="423.6" width="53.400000000000006" height="8.699999999999932" fill="#d4d0c8" />
<rect x="122.9" y="423.6" width="52.400000000000006" height="7.699999999999932" fill="#ffffff" />
<text x="123.9" y="430.45" font-family="Liberation Sans" font-size="8.2" fill="#000" font-weight="normal" font-style="normal" text-anchor="start" textLength="40" lengthAdjust="spacingAndGlyphs" >200 mV/Div</text>
<text x="96.60000000000002" y="444.70000000000005" font-family="Liberation Sans" font-size="8.2" fill="#000" font-weight="normal" font-style="normal" text-anchor="start" textLength="39.5" lengthAdjust="spacingAndGlyphs" >Y pos.(Div):</text>
<rect x="138.10000000000002" y="435.6" width="39.19999999999999" height="11.699999999999932" fill="#ffffff" />
<rect x="138.10000000000002" y="435.6" width="38.19999999999999" height="10.699999999999932" fill="#808080" />
<rect x="139.10000000000002" y="436.6" width="37.19999999999999" height="9.699999999999932" fill="#d4d0c8" />
<rect x="139.10000000000002" y="436.6" width="36.19999999999999" height="8.699999999999932" fill="#404040" />
<rect x="140.10000000000002" y="437.6" width="36.19999999999999" height="8.699999999999932" fill="#d4d0c8" />
<rect x="140.10000000000002" y="437.6" width="35.19999999999999" height="7.699999999999932" fill="#ffffff" />
<text x="141.10000000000002" y="444.45" font-family="Liberation Sans" font-size="8.2" fill="#000" font-weight="normal" font-style="normal" text-anchor="start" textLength="4.5" lengthAdjust="spacingAndGlyphs" >0</text>
<rect x="96.80000000000001" y="451.70000000000005" width="15.599999999999994" height="12.299999999999955" fill="#ffffff" />
<rect x="96.80000000000001" y="451.70000000000005" width="14.599999999999994" height="11.299999999999955" fill="#404040" />
<rect x="97.80000000000001" y="452.70000000000005" width="13.599999999999994" height="10.299999999999955" fill="#d4d0c8" />
<rect x="97.80000000000001" y="452.70000000000005" width="12.599999999999994" height="9.299999999999955" fill="#808080" />
<rect x="98.80000000000001" y="453.70000000000005" width="11.599999999999994" height="8.299999999999955" fill="#ece9e4" />
<text x="104.60000000000001" y="460.85" font-family="Liberation Sans" font-size="8.2" fill="#ff0000" font-weight="normal" font-style="normal" text-anchor="middle" textLength="11" lengthAdjust="spacingAndGlyphs" >AC</text>
<rect x="113.4" y="451.70000000000005" width="14.400000000000006" height="12.299999999999955" fill="#404040" />
<rect x="113.4" y="451.70000000000005" width="13.400000000000006" height="11.299999999999955" fill="#ffffff" />
<rect x="114.4" y="452.70000000000005" width="12.400000000000006" height="10.299999999999955" fill="#808080" />
<rect x="114.4" y="452.70000000000005" width="11.400000000000006" height="9.299999999999955" fill="#d4d0c8" />
<text x="120.60000000000001" y="460.85" font-family="Liberation Sans" font-size="8.2" fill="#ff0000" font-weight="normal" font-style="normal" text-anchor="middle" textLength="4.5" lengthAdjust="spacingAndGlyphs" >0</text>
<rect x="128.4" y="451.70000000000005" width="17.400000000000006" height="12.299999999999955" fill="#404040" />
<rect x="128.4" y="451.70000000000005" width="16.400000000000006" height="11.299999999999955" fill="#ffffff" />
<rect x="129.4" y="452.70000000000005" width="15.400000000000006" height="10.299999999999955" fill="#808080" />
<rect x="129.4" y="452.70000000000005" width="14.400000000000006" height="9.299999999999955" fill="#d4d0c8" />
<text x="137.10000000000002" y="460.85" font-family="Liberation Sans" font-size="8.2" fill="#ff0000" font-weight="normal" font-style="normal" text-anchor="middle" textLength="11" lengthAdjust="spacingAndGlyphs" >DC</text>
<rect x="146.60000000000002" y="451.70000000000005" width="13.199999999999989" height="12.299999999999955" fill="#404040" />
<rect x="146.60000000000002" y="451.70000000000005" width="12.199999999999989" height="11.299999999999955" fill="#ffffff" />
<rect x="147.60000000000002" y="452.70000000000005" width="11.199999999999989" height="10.299999999999955" fill="#808080" />
<rect x="147.60000000000002" y="452.70000000000005" width="10.199999999999989" height="9.299999999999955" fill="#d4d0c8" />
<text x="153.20000000000002" y="460.85" font-family="Liberation Sans" font-size="8.2" fill="#ff0000" font-weight="normal" font-style="normal" text-anchor="middle" textLength="3" lengthAdjust="spacingAndGlyphs" >-</text>
<path d="M172.19620000000003,460.2538 A3.4,3.4 0 0 1 177.0038,455.44620000000003" fill="none" stroke="#303030" stroke-width="1"/>
<path d="M177.0038,455.44620000000003 A3.4,3.4 0 0 1 172.19620000000003,460.2538" fill="none" stroke="#ffffff" stroke-width="1"/>
<circle cx="174.60000000000002" cy="457.85" r="1.3" fill="#606060"/>
<rect x="182" y="416.6" width="103" height="47.69999999999999" fill="none" stroke="#808080" stroke-width="1"/>
<rect x="183" y="417.6" width="103" height="47.69999999999999" fill="none" stroke="#ffffff" stroke-width="1"/>
<rect x="187" y="412.6" width="25" height="8" fill="#d4d0c8" />
<text x="188" y="419.90000000000003" font-family="Liberation Sans" font-size="8.3" fill="#000" font-weight="normal" font-style="normal" text-anchor="start" textLength="22" lengthAdjust="spacingAndGlyphs" >Trigger</text>
<text x="184" y="432.6" font-family="Liberation Sans" font-size="8.2" fill="#000" font-weight="normal" font-style="normal" text-anchor="start" textLength="19.5" lengthAdjust="spacingAndGlyphs" >Edge:</text>
<rect x="213.2" y="423.7" width="11.4" height="11.3" fill="#ffffff" />
<rect x="213.2" y="423.7" width="10.4" height="10.3" fill="#404040" />
<rect x="214.2" y="424.7" width="9.4" height="9.3" fill="#d4d0c8" />
<rect x="214.2" y="424.7" width="8.4" height="8.3" fill="#808080" />
<rect x="215.2" y="425.7" width="7.4" height="7.300000000000001" fill="#ece9e4" />
<path d="M216.3,432.1 h2.8 v-5.5 h2.8 M217.5,429.4 h3.2" fill="none" stroke="#000" stroke-width="1.1"/>
<rect x="224.60000000000002" y="423.7" width="11.8" height="11.3" fill="#404040" />
<rect x="224.60000000000002" y="423.7" width="10.8" height="10.3" fill="#ffffff" />
<rect x="225.60000000000002" y="424.7" width="9.8" height="9.3" fill="#808080" />
<rect x="225.60000000000002" y="424.7" width="8.8" height="8.3" fill="#d4d0c8" />
<path d="M227.8,426.6 h2.8 v5.5 h2.8 M229,429.4 h3.2" fill="none" stroke="#000" stroke-width="1.1"/>
<rect x="239.5" y="423.7" width="11.5" height="11.300000000000011" fill="#ffffff" />
<rect x="239.5" y="423.7" width="10.5" height="10.300000000000011" fill="#404040" />
<rect x="240.5" y="424.7" width="9.5" height="9.300000000000011" fill="#d4d0c8" />
<rect x="240.5" y="424.7" width="8.5" height="8.300000000000011" fill="#808080" />
<rect x="241.5" y="425.7" width="7.5" height="7.300000000000011" fill="#ece9e4" />
<text x="245.25" y="432.35" font-family="Liberation Sans" font-size="8.2" fill="#a0a0a0" font-weight="normal" font-style="normal" text-anchor="middle" textLength="6" lengthAdjust="spacingAndGlyphs" >A</text>
<rect x="251" y="423.7" width="13" height="11.300000000000011" fill="#404040" />
<rect x="251" y="423.7" width="12" height="10.300000000000011" fill="#ffffff" />
<rect x="252" y="424.7" width="11" height="9.300000000000011" fill="#808080" />
<rect x="252" y="424.7" width="10" height="8.300000000000011" fill="#d4d0c8" />
<text x="257.5" y="432.35" font-family="Liberation Sans" font-size="8.2" fill="#a0a0a0" font-weight="normal" font-style="normal" text-anchor="middle" textLength="6" lengthAdjust="spacingAndGlyphs" >B</text>
<rect x="264" y="423.7" width="16.19999999999999" height="11.300000000000011" fill="#404040" />
<rect x="264" y="423.7" width="15.199999999999989" height="10.300000000000011" fill="#ffffff" />
<rect x="265" y="424.7" width="14.199999999999989" height="9.300000000000011" fill="#808080" />
<rect x="265" y="424.7" width="13.199999999999989" height="8.300000000000011" fill="#d4d0c8" />
<text x="272.1" y="432.35" font-family="Liberation Sans" font-size="8.2" fill="#a0a0a0" font-weight="normal" font-style="normal" text-anchor="middle" textLength="11" lengthAdjust="spacingAndGlyphs" >Ext</text>
<text x="184" y="445.70000000000005" font-family="Liberation Sans" font-size="8.2" fill="#000" font-weight="normal" font-style="normal" text-anchor="start" textLength="20.5" lengthAdjust="spacingAndGlyphs" >Level:</text>
<rect x="213.2" y="437.9" width="44.80000000000001" height="11.200000000000045" fill="#ffffff" />
<rect x="213.2" y="437.9" width="43.80000000000001" height="10.200000000000045" fill="#808080" />
<rect x="214.2" y="438.9" width="42.80000000000001" height="9.200000000000045" fill="#d4d0c8" />
<rect x="214.2" y="438.9" width="41.80000000000001" height="8.200000000000045" fill="#404040" />
<rect x="215.2" y="439.9" width="41.80000000000001" height="8.200000000000045" fill="#d4d0c8" />
<rect x="215.2" y="439.9" width="40.80000000000001" height="7.2000000000000455" fill="#ffffff" />
<text x="216.2" y="446.5" font-family="Liberation Sans" font-size="8.2" fill="#000" font-weight="normal" font-style="normal" text-anchor="start" textLength="4.5" lengthAdjust="spacingAndGlyphs" >0</text>
<rect x="259.5" y="437.9" width="20.30000000000001" height="11.200000000000045" fill="#ffffff" />
<rect x="259.5" y="437.9" width="19.30000000000001" height="10.200000000000045" fill="#808080" />
<rect x="260.5" y="438.9" width="18.30000000000001" height="9.200000000000045" fill="#d4d0c8" />
<rect x="260.5" y="438.9" width="17.30000000000001" height="8.200000000000045" fill="#404040" />
<rect x="261.5" y="439.9" width="17.30000000000001" height="8.200000000000045" fill="#d4d0c8" />
<rect x="261.5" y="439.9" width="16.30000000000001" height="7.2000000000000455" fill="#ffffff" />
<text x="262.5" y="446.5" font-family="Liberation Sans" font-size="8.2" fill="#000" font-weight="normal" font-style="normal" text-anchor="start" textLength="6" lengthAdjust="spacingAndGlyphs" >V</text>
<rect x="184.39999999999998" y="451.70000000000005" width="24.900000000000034" height="12.299999999999955" fill="#404040" />
<rect x="184.39999999999998" y="451.70000000000005" width="23.900000000000034" height="11.299999999999955" fill="#ffffff" />
<rect x="185.39999999999998" y="452.70000000000005" width="22.900000000000034" height="10.299999999999955" fill="#808080" />
<rect x="185.39999999999998" y="452.70000000000005" width="21.900000000000034" height="9.299999999999955" fill="#d4d0c8" />
<text x="196.85" y="460.85" font-family="Liberation Sans" font-size="8.2" fill="#ff0000" font-weight="normal" font-style="normal" text-anchor="middle" textLength="18.5" lengthAdjust="spacingAndGlyphs" >Single</text>
<rect x="209.3" y="451.70000000000005" width="29.30000000000001" height="12.299999999999955" fill="#404040" />
<rect x="209.3" y="451.70000000000005" width="28.30000000000001" height="11.299999999999955" fill="#ffffff" />
<rect x="210.3" y="452.70000000000005" width="27.30000000000001" height="10.299999999999955" fill="#808080" />
<rect x="210.3" y="452.70000000000005" width="26.30000000000001" height="9.299999999999955" fill="#d4d0c8" />
<text x="223.95000000000002" y="460.85" font-family="Liberation Sans" font-size="8.2" fill="#ff0000" font-weight="normal" font-style="normal" text-anchor="middle" textLength="23.5" lengthAdjust="spacingAndGlyphs" >Normal</text>
<rect x="238.60000000000002" y="451.70000000000005" width="20.399999999999977" height="12.299999999999955" fill="#404040" />
<rect x="238.60000000000002" y="451.70000000000005" width="19.399999999999977" height="11.299999999999955" fill="#ffffff" />
<rect x="239.60000000000002" y="452.70000000000005" width="18.399999999999977" height="10.299999999999955" fill="#808080" />
<rect x="239.60000000000002" y="452.70000000000005" width="17.399999999999977" height="9.299999999999955" fill="#d4d0c8" />
<text x="248.8" y="460.85" font-family="Liberation Sans" font-size="8.2" fill="#ff0000" font-weight="normal" font-style="normal" text-anchor="middle" textLength="15.5" lengthAdjust="spacingAndGlyphs" >Auto</text>
<rect x="259" y="451.70000000000005" width="22.899999999999977" height="12.299999999999955" fill="#ffffff" />
<rect x="259" y="451.70000000000005" width="21.899999999999977" height="11.299999999999955" fill="#404040" />
<rect x="260" y="452.70000000000005" width="20.899999999999977" height="10.299999999999955" fill="#d4d0c8" />
<rect x="260" y="452.70000000000005" width="19.899999999999977" height="9.299999999999955" fill="#808080" />
<rect x="261" y="453.70000000000005" width="18.899999999999977" height="8.299999999999955" fill="#ece9e4" />
<text x="270.45" y="460.85" font-family="Liberation Sans" font-size="8.2" fill="#ff0000" font-weight="normal" font-style="normal" text-anchor="middle" textLength="17.5" lengthAdjust="spacingAndGlyphs" >None</text></svg></body></html>
